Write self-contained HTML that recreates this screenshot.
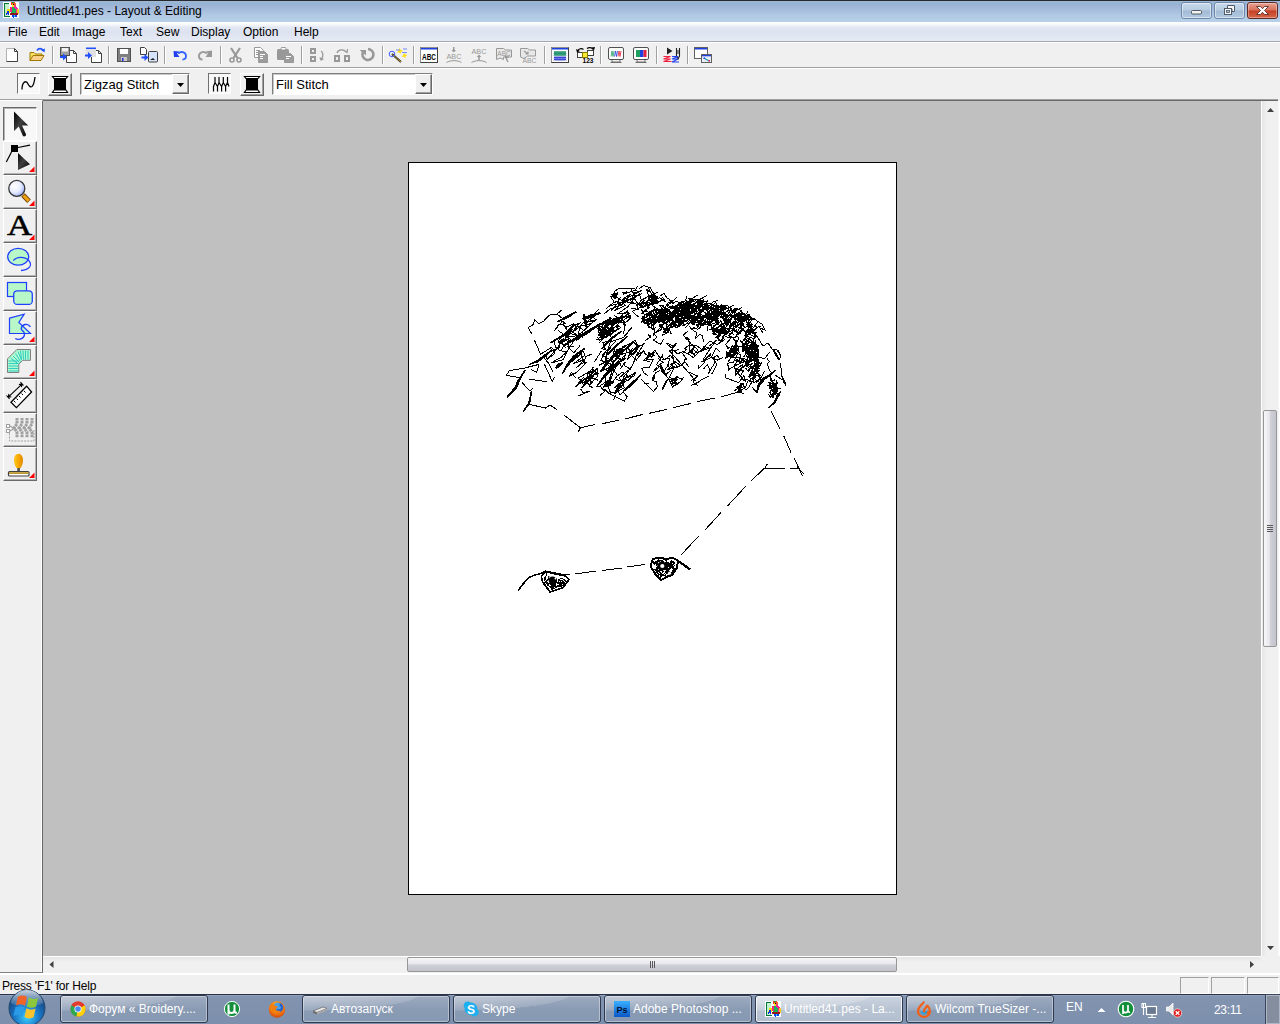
<!DOCTYPE html>
<html>
<head>
<meta charset="utf-8">
<title>Untitled41.pes - Layout &amp; Editing</title>
<style>
*{box-sizing:border-box;margin:0;padding:0}
html,body{width:1280px;height:1024px;overflow:hidden;background:#f0f0f0;font-family:"Liberation Sans",sans-serif;font-size:12px;color:#000}
.abs{position:absolute}
#titlebar{position:absolute;left:0;top:0;width:1280px;height:22px;background:linear-gradient(to bottom,#262a2e 0,#262a2e 1px,#a0b8d6 1px,#95b3d3 4px,#a3b6d9 7px,#a7c0dd 11px,#b2cae5 16px,#b5d0e8 20px,#bccdea 22px)}
#titlebar .ttl{position:absolute;left:27px;top:4px;font-size:12px;line-height:15px;white-space:nowrap;letter-spacing:0px}
#menubar{position:absolute;left:0;top:22px;width:1280px;height:19px;background:linear-gradient(to bottom,#ffffff 0,#f4f6fb 3px,#e3e8f4 5px,#dde2f0 10px,#e6eaf5 19px)}
#menubar span{position:absolute;top:3px;font-size:12px;line-height:15px;white-space:nowrap}
#menuline{position:absolute;left:0;top:41px;width:1280px;height:3px;background:linear-gradient(to bottom,#a5a9b2 0,#a5a9b2 1px,#fff 1px,#fff 2px,#f0f0f0 2px)}
#tb1{position:absolute;left:0;top:44px;width:1280px;height:24px}
#tbline{position:absolute;left:0;top:67px;width:1280px;height:2px;background:linear-gradient(to bottom,#a0a0a0 0,#a0a0a0 1px,#fff 1px)}
#tb2{position:absolute;left:0;top:69px;width:1280px;height:30px}
.sunk{position:absolute;border:1px solid;border-color:#707070 #fff #fff #707070;background:#f8f8f8}
.rais{position:absolute;border:1px solid;border-color:#fff #696969 #696969 #fff;background:#f0f0f0;box-shadow:inset -1px -1px 0 #a0a0a0}
.combo{position:absolute;background:#fff;border:1px solid;border-color:#808080 #fff #fff #808080;box-shadow:inset 1px 1px 0 #c8c8c8;font-size:13px;line-height:21px;padding-left:3px;white-space:nowrap}
.combo i{position:absolute;right:0;top:0;width:17px;height:20px;background:#f0f0f0;border:1px solid;border-color:#fff #696969 #696969 #fff;box-shadow:inset -1px -1px 0 #a0a0a0}
.combo i:after{content:"";position:absolute;left:4px;top:8px;width:7px;height:4px;background:#000;clip-path:polygon(0 0,100% 0,50% 100%)}
#work{position:absolute;left:43px;top:101px;width:1218px;height:855px;background:#c0c0c0}
#topline{position:absolute;left:0;top:99px;width:1280px;height:2px;background:linear-gradient(to bottom,#a0a0a0 0,#a0a0a0 1px,#696969 1px);clip-path:polygon(0 0,1278px 0,1278px 2px,42px 2px,42px 1px,0 1px)}
#page{position:absolute;left:408px;top:162px;width:489px;height:733px;background:#fff;border:1px solid #000}
#art{position:absolute;left:-1px;top:-1px}
#lefttb{position:absolute;left:0;top:100px;width:43px;height:873px;background:#f0f0f0;border-right:1px solid #696969;border-bottom:1px solid #808080;border-top:1px solid #fff;box-shadow:inset -1px 0 0 #fff}
.tbtn{position:absolute;left:3px;width:34px;height:34px;border:1px solid;border-color:#fff #696969 #696969 #fff;background:#f0f0f0;box-shadow:inset -1px -1px 0 #b4b4b4}
.tbtn.on{border-color:#696969 #fff #fff #696969;background:#f8f8f8;box-shadow:inset 1px 1px 0 #b4b4b4}
.tbtn svg{position:absolute;left:0;top:0;width:33px;height:32px;overflow:visible}
.tbtn b{position:absolute;right:1px;bottom:1px;width:0;height:0;border-left:7px solid transparent;border-bottom:7px solid #f00}
#vscroll{position:absolute;left:1261px;top:101px;width:19px;height:855px;background:linear-gradient(to right,#fff 0,#fff 1px,#e6e6e6 1px,#f0f0f0 6px,#f0f0f0 17px,#fff 18px)}
#hscroll{position:absolute;left:43px;top:956px;width:1218px;height:18px;background:linear-gradient(to bottom,#fff 0,#fff 1px,#e6e6e6 1px,#f0f0f0 6px,#f0f0f0 17px,#fff 17px)}
.thumb{position:absolute;border:1px solid #979797;border-radius:2px}
#status{position:absolute;left:0;top:973px;width:1280px;height:21px;background:#f0f0f0;border-top:2px solid #fff}
#status span{position:absolute;left:2px;top:4px;font-size:12px;line-height:15px;letter-spacing:-.2px}
#status div{position:absolute;top:2px;height:17px;border:1px solid;border-color:#a0a0a0 #fff #fff #a0a0a0}
#taskbar{position:absolute;left:0;top:994px;width:1280px;height:30px;background:linear-gradient(to bottom,#2a3446 0,#2a3446 1px,#9aabc6 1px,#8395b1 2px,#8193af 4px,#7c8fac 30px)}
.tk{position:absolute;top:1px;width:148px;height:28px;border:1px solid #2f3a50;border-radius:3px;background:radial-gradient(ellipse 115% 95% at 0% -10%,rgba(255,255,255,.42) 0,rgba(255,255,255,.14) 69%,rgba(255,255,255,0) 70%),linear-gradient(to bottom,#9eabc0 0,#8a9bb4 50%,#8798b2 100%);box-shadow:inset 0 0 0 1px rgba(255,255,255,.38);color:#fff;font-size:12px;line-height:16px;white-space:nowrap;overflow:hidden}
.tk.act{background:radial-gradient(ellipse 115% 95% at 0% -10%,rgba(255,255,255,.5) 0,rgba(255,255,255,.2) 69%,rgba(255,255,255,0) 70%),linear-gradient(to bottom,#ccd4e0 0,#b9c4d3 50%,#b3bfd0 100%);box-shadow:inset 0 0 0 1px rgba(255,255,255,.8)}
.tk span{position:absolute;left:28px;top:5px}
.tk svg{position:absolute;left:9px;top:5px;width:16px;height:16px;overflow:visible}
</style>
</head>
<body>
<svg width="0" height="0" style="position:absolute"><defs><symbol id="parrot" viewBox="0 0 16 16"><g shape-rendering="crispEdges">
<rect x="0" y="0" width="16" height="16" fill="#fff"/>
<rect x="1" y="2" width="5" height="12" fill="#c4f0cc"/><path d="M6,1.500h-5v13h6" fill="none" stroke="#00783c" stroke-width="1"/><rect x="0.500" y="1" width="1.500" height="14" fill="#00783c"/>
<path d="M3,11l1.500,-4h2l1,2l-2,4z" fill="#f8e000"/><path d="M3,13l2,-4l1,4M3.500,11.500h2.500" fill="none" stroke="#1030f0" stroke-width="1"/>
<rect x="8" y="0" width="4" height="3" fill="#f04018"/><rect x="9" y="0" width="2" height="1" fill="#20a040"/><rect x="9" y="2" width="3" height="3" fill="#f8e020"/><rect x="10" y="2" width="1" height="1" fill="#000"/><rect x="11" y="1" width="2" height="3" fill="#f06030"/>
<path d="M8,5h3l2,2v5h-4l-1,-2z" fill="#18b058"/><path d="M11,3l4,3v6h-2v-4l-2,-2z" fill="#ff20a0"/><path d="M7,5h2v5h-2z" fill="#ff2080"/><rect x="14" y="7" width="1.500" height="5" fill="#ffc820"/>
<path d="M7,11h8v1.500h-8z" fill="#901818"/><path d="M9,12.500h2v3.500h-1l-1,-1z" fill="#1040f0"/><path d="M11.500,12.500h2v2.500h-1.500z" fill="#1040f0"/><rect x="10.500" y="13" width="1" height="2" fill="#20d0f0"/>
</g></symbol></defs></svg>
<div id="titlebar"><svg style="position:absolute;left:3px;top:2px" width="16" height="16"><use href="#parrot"/></svg><svg style="position:absolute;left:1178px;top:0" width="102" height="22" viewBox="1178 0 102 22">
<defs><linearGradient id="cb" x1="0" y1="0" x2="0" y2="1"><stop offset="0" stop-color="#c9daec"/><stop offset=".48" stop-color="#b7cce2"/><stop offset=".52" stop-color="#a2bad5"/><stop offset="1" stop-color="#b4cbe2"/></linearGradient>
<linearGradient id="cr" x1="0" y1="0" x2="0" y2="1"><stop offset="0" stop-color="#e9a596"/><stop offset=".48" stop-color="#d9705a"/><stop offset=".52" stop-color="#c43f26"/><stop offset="1" stop-color="#d8694a"/></linearGradient></defs>
<rect x="1181.500" y="2.500" width="30" height="16" rx="2.500" fill="url(#cb)" stroke="#6d88a8"/><rect x="1182.500" y="3.500" width="28" height="14" rx="1.500" fill="none" stroke="#fff" stroke-opacity=".45"/>
<rect x="1214.500" y="2.500" width="30" height="16" rx="2.500" fill="url(#cb)" stroke="#6d88a8"/><rect x="1215.500" y="3.500" width="28" height="14" rx="1.500" fill="none" stroke="#fff" stroke-opacity=".45"/>
<rect x="1247.500" y="2.500" width="30" height="16" rx="2.500" fill="url(#cr)" stroke="#5c2a24"/><rect x="1248.500" y="3.500" width="28" height="14" rx="1.500" fill="none" stroke="#fff" stroke-opacity=".35"/>
<rect x="1191.500" y="10.500" width="10" height="3.500" rx="1" fill="#f4f4ee" stroke="#505a68"/>
<path d="M1227.500,5.500h7v6h-2.500v-2.500h-4.500z" fill="#f4f6f8" stroke="#505a68"/><rect x="1224.500" y="8.500" width="7" height="6" fill="#f4f6f8" stroke="#505a68"/><rect x="1226.500" y="10.500" width="3" height="2" fill="#a9c0da" stroke="#505a68" stroke-width=".8"/>
<path d="M1256.500,6.500h4l2,2.200l2,-2.200h4l-4,4l4,4h-4l-2,-2.200l-2,2.200h-4l4,-4z" fill="#fff" stroke="#5a3030" stroke-width=".9"/>
</svg><div class="ttl">Untitled41.pes - Layout &amp; Editing</div></div>
<div id="menubar">
<span style="left:8px">File</span><span style="left:39px">Edit</span><span style="left:72px">Image</span><span style="left:120px">Text</span><span style="left:156px">Sew</span><span style="left:191px">Display</span><span style="left:243px">Option</span><span style="left:294px">Help</span>
</div>
<div id="menuline"></div>
<div id="tb1"><!--TB1-START--><svg style="position:absolute;left:0;top:0" width="720" height="24" viewBox="0 44 720 24" font-family="Liberation Sans, sans-serif">
<g fill="none" shape-rendering="crispEdges">
<!-- separators -->
<path d="M52.5,46v18M108.5,46v18M164.5,46v18M220.5,46v18M301.5,46v18M382.5,46v18M413.5,46v18M544.5,46v18M600.5,46v18M656.5,46v18M687.5,46v18" stroke="#a0a0a0"/>
<path d="M53.5,46v18M109.5,46v18M165.5,46v18M221.5,46v18M302.5,46v18M383.5,46v18M414.5,46v18M545.5,46v18M601.5,46v18M657.5,46v18M688.5,46v18" stroke="#fff"/>
</g>
<!-- 1 new -->
<path d="M6.5,48.5h8l3,3v10h-11z" fill="#fff" stroke="#b0b0b0"/><path d="M14.5,48.5l3,3v10h-11M14.5,48.5v3h3" fill="none" stroke="#404040"/>
<!-- 2 open -->
<path d="M30,60.5v-8h4l1.500,1.500h6.500v2" fill="#f8e060" stroke="#a07800"/><path d="M30,60.500l3,-5h11l-3,5z" fill="#fbd08a" stroke="#a07800"/><path d="M37,50.500c1.500,-2.500 4.500,-2.500 6,0" fill="none" stroke="#2050ff" stroke-width="1.600"/><path d="M41,50l3.500,2.500l0.500,-4z" fill="#2050ff"/>
<!-- 3 import floppy->doc -->
<path d="M66.500,50.500h7l3,3v9h-10z" fill="#fff" stroke="#404040"/><path d="M73.500,50.500v3h3" fill="none" stroke="#404040"/>
<rect x="60.500" y="47.500" width="9" height="8" fill="#a0a0a0" stroke="#505050"/><rect x="62" y="48" width="6" height="3.500" fill="#f0f0f0"/>
<path d="M60,56h3v-2.500l4,3.500l-4,3.500v-2.500h-3z" fill="#2050ff"/>
<!-- 4 import window->doc -->
<path d="M91.500,50.500h7l3,3v9h-10z" fill="#fff" stroke="#404040"/><path d="M98.500,50.500v3h3" fill="none" stroke="#404040"/>
<rect x="86" y="48" width="10" height="9" fill="#e0e0e0"/><rect x="86" y="47.500" width="10" height="1.500" fill="#2050ff"/>
<path d="M85,54.500h3v-2.500l4,3.500l-4,3.500v-2.500h-3z" fill="#2050ff"/>
<!-- 5 save -->
<rect x="117.500" y="48.500" width="13" height="13" fill="#808080" stroke="#505050"/><rect x="120" y="49" width="8" height="5" fill="#fff"/><rect x="121" y="57" width="6" height="4" fill="#c8c8c8"/><rect x="122" y="58" width="1.500" height="3" fill="#2030e0"/>
<!-- 6 doc->image -->
<path d="M140.500,47.500h4l2,2v5h-6z" fill="#fff" stroke="#404040"/>
<rect x="148.500" y="51.500" width="9" height="10.500" rx="1" fill="#d6e3fa" stroke="#404040"/><path d="M150,60h5l-2,-2z" fill="#202020"/>
<path d="M141.500,56.500h3v-2.500l4,3.500l-4,3.500v-2.500h-3z" fill="#2050ff"/>
<!-- 7 undo -->
<path d="M178,53.500c4,-3 8,-1 8,2.500c0,2 -1.500,3.500 -3.500,3.500" fill="none" stroke="#3060ff" stroke-width="1.800"/><path d="M173.500,51l6,0.500l-2.500,2l2.500,3.500h-5.500z" fill="#2040f0"/>
<!-- 8 redo -->
<path d="M207,53.500c-4,-3 -8,-1 -8,2.500c0,2 1.500,3.500 3.500,3.500" fill="none" stroke="#9c9c9c" stroke-width="2"/><path d="M212,50.500l-6.500,1l2.500,2l-2.500,3.500h6.500z" fill="#989898"/>
<!-- 9 cut -->
<g stroke="#989898" fill="none"><path d="M231,48l6.500,10M240,48l-6.500,10" stroke-width="2.200"/><circle cx="232" cy="60" r="2" stroke-width="1.600"/><circle cx="239" cy="60" r="2" stroke-width="1.600"/></g>
<!-- 10 copy -->
<g fill="#fff" stroke="#989898"><path d="M254.500,47.500h6l3,3v7h-9z"/><path d="M258.500,51.500h6l3,3v8h-9z" fill="#9c9c9c"/><path d="M260,54.500h5M260,56.500h3M260,58.500h3" stroke="#fff"/><path d="M256,50.500h4M256,52.500h2M256,54.500h2" stroke="#989898"/></g>
<!-- 11 paste -->
<g><rect x="277" y="49" width="12" height="11" rx="1.500" fill="#989898"/><rect x="281" y="47.500" width="5" height="2.500" rx="1" fill="#fff" stroke="#989898"/><path d="M284.500,53.500h6l3,3v6h-9z" fill="#9c9c9c" stroke="#989898"/><path d="M286,56.500h5M286,58.500h3" stroke="#fff"/></g>
<!-- 12 flip -->
<g fill="#989898" shape-rendering="crispEdges"><rect x="310" y="48" width="6" height="6"/><rect x="310" y="56" width="6" height="6"/><rect x="312" y="50" width="2" height="2" fill="#f0f0f0"/><rect x="312" y="58" width="2" height="2" fill="#f0f0f0"/></g>
<path d="M321,51c2.500,1.500 2.500,6 0,8.500M320,57.500l1,2.500l2.500,-1" fill="none" stroke="#989898" stroke-width="1.300"/>
<!-- 13 -->
<g fill="#989898" shape-rendering="crispEdges"><rect x="334" y="55" width="6" height="7"/><rect x="344" y="55" width="6" height="7"/><rect x="336" y="57" width="2" height="3" fill="#f0f0f0"/><rect x="346" y="57" width="2" height="3" fill="#f0f0f0"/></g>
<path d="M337,53c1.500,-4 7,-4 9,-1M344,50.500l3,2l0.500,-3.500" fill="none" stroke="#989898" stroke-width="1.300"/>
<!-- 14 rotate -->
<path d="M363,52a5.500,5.500 0 1 0 5,-3" fill="none" stroke="#989898" stroke-width="2.600"/><path d="M359.500,50h6.500v5.500z" fill="#989898"/>
<!-- 15 wand -->
<path d="M392,54l9,8" stroke="#202020" stroke-width="2"/><path d="M392.500,54.500l8.500,7.500" stroke="#e8c020" stroke-width="0.800"/><circle cx="392" cy="54" r="2.800" fill="none" stroke="#4060ff" stroke-width="1"/>
<path d="M399.500,48l1.500,2l2,0.500l-2,1.500l-0.500,2l-1.500,-1.500l-2,0l1.500,-2z" fill="#ffe020"/><path d="M404,53l1.500,1.500l2,0.500l-2,1.500l0,2l-1.500,-1.500l-2,0l1,-2z" fill="#ffe020"/><path d="M396,50h4M403,49h4M402,52.500h5" stroke="#5070ff" stroke-width="0.800"/>
<!-- 16 ABC box -->
<rect x="420.500" y="47.500" width="17" height="15" fill="#fff" stroke="#404040"/><path d="M420.500,62.500v-15h17" fill="none" stroke="#909090"/><rect x="421" y="48" width="16" height="1.500" fill="#2040e0"/>
<text x="429" y="59.500" font-size="9" font-weight="bold" text-anchor="middle" textLength="14" lengthAdjust="spacingAndGlyphs" fill="#000">ABC</text>
<!-- 17 -->
<g fill="#989898" stroke="none"><text x="454" y="59" font-size="8" text-anchor="middle" textLength="15" lengthAdjust="spacingAndGlyphs">ABC</text><path d="M453,47h1.500v3h1.500l-2.250,2.500l-2.250,-2.500h1.500z"/></g><path d="M446.500,62.500c4,-2.500 11,-2.500 15,0" fill="none" stroke="#989898"/>
<!-- 18 -->
<g fill="#989898" stroke="none"><text x="479" y="54" font-size="8" text-anchor="middle" textLength="15" lengthAdjust="spacingAndGlyphs">ABC</text><path d="M478.250,60h1.500v-3h1.500l-2.250,-2.500l-2.250,2.500h1.500z"/></g><path d="M471.500,62.500c4,-2.500 11,-2.500 15,0" fill="none" stroke="#989898"/>
<!-- 19 -->
<g fill="none" stroke="#989898"><path d="M496.500,48.500h7l2,1.500h6v7h-8v2.500l-3.500,-1.500l-3.500,1.500z" fill="#e8e8e8"/><path d="M505,56l3,6M505,56l3.500,1.500" stroke-width="1.400"/></g><text x="504" y="56" font-size="6.500" text-anchor="middle" fill="#989898">ABC</text>
<!-- 20 -->
<g fill="none" stroke="#989898"><path d="M520.500,48.500h7l2,1.500h6v6h-8l-3.500,2.500l-3.500,-1.500z" fill="#e8e8e8"/><path d="M524,51l4,3M528,51.500v2.500h-2.500" stroke-width="1.200"/></g><text x="529.500" y="63" font-size="8" text-anchor="middle" textLength="14" lengthAdjust="spacingAndGlyphs" fill="#989898">ABC</text>
<!-- 21 wave box -->
<rect x="551.500" y="47.500" width="17" height="15" fill="#fff" stroke="#404040"/><path d="M551.500,62.500v-15h17" fill="none" stroke="#909090"/><rect x="552" y="48" width="16" height="1.500" fill="#2040e0"/>
<path d="M554,54l1,-3l1,3l1,-3l1,3l1,-3l1,3l1,-3l1,3l1,-3l1,3l1,-3l1,3M554,56l1,-3l1,3l1,-3l1,3l1,-3l1,3l1,-3l1,3l1,-3l1,3l1,-3l1,3" fill="none" stroke="#189068" stroke-width=".9"/><path d="M554,58.500l1,-2l1,2l1,-2l1,2l1,-2l1,2l1,-2l1,2l1,-2l1,2l1,-2l1,2M554,60.500l1,-2l1,2l1,-2l1,2l1,-2l1,2l1,-2l1,2l1,-2l1,2l1,-2l1,2" fill="none" stroke="#2030d0" stroke-width=".9"/>
<!-- 22 -->
<g shape-rendering="crispEdges"><rect x="577.500" y="52.500" width="6" height="5" fill="#fff" stroke="#404040"/><rect x="587.500" y="50.500" width="6" height="5" fill="#fff" stroke="#404040"/><rect x="582.500" y="52.500" width="5" height="5" fill="#ffe830" stroke="#808000"/></g>
<path d="M577.500,51c1,-2.500 4,-3 6,-1.500M587,48.500c2,-1.500 5,-1 6,1" fill="none" stroke="#000" stroke-width="1.200"/><path d="M576,49l1,3.500l3,-1.500zM591.500,47.500l2.500,3l1,-3.500z" fill="#000"/>
<text x="588" y="63" font-size="7" font-weight="bold" text-anchor="middle" textLength="11" lengthAdjust="spacingAndGlyphs" fill="#000">123</text>
<!-- 23 monitor zigzag -->
<rect x="608.500" y="47.500" width="15" height="12" rx="1.500" fill="#fff" stroke="#505050"/><path d="M612,60v2h8v-2M610.500,62.500h11" fill="none" stroke="#707070"/>
<path d="M611,56.500l1,-5.500l1,5.500l1,-5.500" fill="none" stroke="#20a060" stroke-width=".8"/><path d="M614.500,56.500l1,-5.500l1,5.500l1,-5.500" fill="none" stroke="#2040e0" stroke-width=".8"/><path d="M618,56.500l1,-5.500l1,5.500l1,-5.500" fill="none" stroke="#e02030" stroke-width=".8"/>
<!-- 24 monitor fill -->
<rect x="633.500" y="47.500" width="15" height="12" rx="1.500" fill="#fff" stroke="#505050"/><path d="M637,60v2h8v-2M635.500,62.500h11" fill="none" stroke="#707070"/>
<rect x="636" y="50" width="4" height="7" fill="#20a060"/><rect x="640" y="50" width="3.500" height="7" fill="#2040e0"/><rect x="643.500" y="50" width="3" height="7" fill="#e02040"/>
<!-- 25 play needle -->
<path d="M667,47.500v7l5.500,-3.500z" fill="#202020"/><path d="M676.500,48v8l1.500,3l1.500,-3v-8" fill="none" stroke="#202020" stroke-width="1.100"/><path d="M678,50v4" stroke="#202020"/>
<path d="M663.500,56.500h7l-7,2.500h7l-7,2.500h8" fill="none" stroke="#f02040" stroke-width="1.100"/><path d="M672,56.500h6l-6,2.500h6l-6,3h7" fill="none" stroke="#2040f0" stroke-width="1.100"/>
<!-- 26 windows -->
<rect x="694.500" y="47.500" width="13" height="11" fill="#fff" stroke="#606060"/><rect x="695" y="48" width="12" height="1.500" fill="#2040e0"/>
<rect x="701.500" y="54.500" width="10" height="8" fill="#e8f0ff" stroke="#606060"/><rect x="702" y="55" width="9" height="1.300" fill="#2040e0"/><path d="M704,58l5,3" stroke="#20a0a0" stroke-width="1.200"/><rect x="703.500" y="57.500" width="1.500" height="1.500" fill="#2040e0"/><rect x="708.500" y="60" width="1.500" height="1.500" fill="#e02040"/>
</svg>
<!--TB1-END--></div>
<div id="tbline"></div>
<div id="tb2">
<div class="sunk" style="left:17px;top:4px;width:23px;height:21px"></div>
<div class="rais" style="left:48px;top:4px;width:24px;height:23px"></div>
<div class="combo" style="left:80px;top:4px;width:110px;height:22px">Zigzag Stitch<i></i></div>
<div class="sunk" style="left:208px;top:4px;width:23px;height:21px"></div>
<div class="rais" style="left:240px;top:4px;width:24px;height:23px"></div>
<svg style="position:absolute;left:0;top:0" width="280" height="30" viewBox="0 69 280 30">
<path d="M22,89.500c0,-3 0.500,-5.500 2,-7c1.500,-1.500 3,-0.500 4,1.500c1,2 2.500,3.500 4,2.500c2,-1.500 2.500,-6 3,-9.500" fill="none" stroke="#000" stroke-width="1.300"/>
<g id="spool"><path d="M52.500,76.500h15l-1.500,2h-12zM54,90h12l1.500,2.500h-15z" fill="#fff" stroke="#000" stroke-width="1.200"/><rect x="54" y="78" width="12" height="12" fill="#000"/></g>
<use href="#spool" x="192"/>
<path d="M215,77v6M219,77v6M223.300,77v6M227.500,77v6M213.500,86v5.500M217.500,86v5.500M221.600,86v5.500M225.600,86v5.500M213.500,86.500L215,82.500L217.500,86.500L219,82.500L221.600,86.500L223.300,82.500L225.600,86.500L227.500,82.500L229,86.500" fill="none" stroke="#000" stroke-width="1.200"/>
</svg><div class="combo" style="left:272px;top:4px;width:161px;height:22px">Fill Stitch<i></i></div>
</div>
<div id="work"></div><div id="topline"></div>
<div id="page"><!--ART-START--><svg id="art" width="489" height="733" viewBox="0 0 489 733" shape-rendering="crispEdges"><path d="M150.1,159.7 153.2,158.4 156.4,157.2 159.4,155.8 162.4,154.1 165.2,152.1 168.1,150.2 167.9,149.8 164.8,151.2 161.6,152.6 158.6,154.2 155.6,155.8 152.8,157.6 149.9,159.3ZM143.1,180.7 150.3,177 157.5,173.1 165.4,164.5 171.1,161.6 170.9,161.2 164.6,163.5 156.5,171.9 149.7,176 142.9,180.3ZM158.1,182.3 168.4,177.2 178.6,172 185.5,167.2 192.2,162.3 191.8,161.7 184.5,165.8 177.4,170 167.6,175.8 157.9,181.7ZM175.1,157.3 177.9,156.6 180.7,156 183.4,155.1 186.3,154 189.2,152.6 192.1,151.3 191.9,150.7 188.8,151.4 185.7,152 182.6,152.9 180,154 177.5,155.4 174.9,156.7ZM175.7,152.5 175.7,156.5 176.4,160.3 177.7,164 178.3,164 178.3,160 177.6,156.2 176.3,152.5ZM99.2,235.4 103.9,230.9 108.3,226.3 110.8,220.9 112.8,216 117.2,208.7 116.8,208.5 111.8,215.4 109.2,220.1 106.9,225.3 103.1,230.1 98.8,235ZM115.5,249.4 118.8,245.2 121.6,241.6 122.9,235.1 123.4,229 123.2,229 122.1,234.9 120.4,241.2 118.2,244.8 115.3,249.2ZM148.3,206.3 149.5,205.5 150.9,204.9 151.9,204.2 152.8,203.5 153.7,202.3 154.7,201.3 154.3,200.7 153,201 151.5,201.2 150.1,201.8 149.1,203.1 148.5,204.5 147.7,205.7ZM154.7,211.9 158.5,205.3 163.1,199.9 166.7,195.7 170.4,191.9 176.6,187 176.2,186.6 169.6,190.9 165.3,194.3 161.5,198.7 157.5,204.7 154.3,211.7ZM173.4,225.9 175.6,223.9 177.8,222 179.9,219.9 182,217.8 183.9,215.6 185.9,213.4 185.7,213.2 183.5,215.2 181.2,217.1 179.1,219.1 177.1,221.2 175.2,223.5 173.2,225.7ZM189.1,224.4 196.5,214.9 205.2,206.2 210.9,201 217.1,196.2 216.9,195.8 210.1,200 203.8,204.8 195.5,214.1 188.7,224.2ZM196.3,224.9 197.7,224.4 199.2,224.1 200.6,223.4 201.7,222.2 202.4,220.7 203.3,219.3 202.7,218.7 201.2,219.3 199.7,219.8 198.4,220.6 197.4,221.6 196.6,222.9 195.7,224.1ZM207,231.9 208.1,230.4 209.3,229 210.3,227.5 211.1,226.1 211.7,224.6 212.5,223.1 212.1,222.9 211,224.1 209.8,225.2 208.7,226.5 207.9,228.2 207.3,230 206.6,231.7ZM215.5,229.6 217.5,228 219.5,226.6 221.5,225.1 223.4,223.4 225.2,221.7 226.9,219.9 228.9,217.6 230.8,215.3 232.8,213.2 232.4,212.8 230.3,214.9 228.1,216.8 225.9,218.7 224,220.4 222.2,222.1 220.5,223.9 218.8,225.7 217.1,227.5 215.3,229.2ZM121.8,202.6 124.4,201.6 127.1,200.8 129.9,199.9 132.3,198.2 134.7,196.4 136.9,194.6 139.2,192.5 141.4,190.4 143.7,188.5 143.5,188.1 141.1,190 138.5,191.7 136.1,193.4 133.7,195.1 131.3,196.9 129.1,198.7 126.7,199.8 124.2,201.1 121.6,202.2ZM251.8,202.1 252.5,205.3 253.5,208.8 255.4,211.2 257.4,213.2 257.8,212.8 256.6,210.4 255.5,207.8 253.9,204.7 252.2,201.9ZM246.5,212.1 246,213.1 245.5,214.1 245,215.1 244.9,216.2 244.9,217.3 244.8,218.5 245.2,218.5 245.6,217.5 246.2,216.5 246.6,215.5 246.7,214.5 246.8,213.3 246.9,212.3ZM259.1,217.6 258.1,219.1 257.1,220.5 256.3,222 255.6,223.6 255,225.3 254.4,226.9 254.6,227.1 255.5,225.6 256.5,224.1 257.3,222.6 258.1,221 258.7,219.4 259.3,217.8ZM349.3,230.3 350.5,226.2 352.2,222.9 354.8,219.7 357.3,216.8 362.6,213.4 367.2,208.5 366.8,208.1 362,212.6 356.3,215.2 353.2,218.3 350.6,221.9 349.5,225.8 348.7,230.1ZM365.2,188.1 365.9,189.7 366.5,191.3 367.3,192.9 368.4,194.5 369.6,196 370.7,197.5 371.1,197.3 370.3,195.6 369.5,193.8 368.7,192.1 367.7,190.7 366.6,189.3 365.6,187.9ZM372.4,229.3 368.9,234.7 366.5,239.2 363.7,242.4 360.9,245.7 361.1,245.9 364.3,243 367.5,240 369.7,235.1 372.6,229.5ZM373.9,214.7 374.4,216.3 374.9,217.9 375.5,219.5 376.2,221 377.1,222.5 377.9,224.1 378.1,223.9 377.6,222.3 377.1,220.7 376.5,219.1 375.8,217.6 374.9,216.1 374.1,214.5ZM195.1,184.1 198.2,181.6 201.3,179.1 204.4,176.5 207.6,174.1 210.8,171.6 214.1,169.1 213.9,168.9 210.5,171.1 207,173.2 203.6,175.5 200.7,178.3 197.8,181.1 194.9,183.9ZM198.1,194.1 201.5,190.9 205,187.7 208.4,184.4 212.3,181 216.2,177.5 220.1,174.1 219.9,173.9 215.8,177.1 211.7,180.3 207.6,183.6 204.3,187 201.1,190.5 197.9,193.9ZM204.1,202.1 207.6,198.2 211.1,194.3 214.4,190.4 218.3,187.1 222.2,183.6 226.1,180.1 225.9,179.9 221.8,183.1 217.7,186.3 213.6,189.6 210.3,193.7 207.1,197.8 203.9,201.9ZM192.1,210.1 194.2,207.5 196.4,204.9 198.4,202.4 200.7,200 202.9,197.5 205.1,195.1 204.9,194.9 202.5,197.1 200,199.3 197.6,201.6 195.6,204.4 193.8,207.2 191.9,209.9Z" fill="#000" stroke="#000" stroke-width="1"/><path d="M277,147.2 274.9,151.4 272.1,152.5 268.5,147.8 271.9,144.7M313.6,162.7 317.7,161.6 320.7,159.4 312.4,162.4M238.3,151 240,152.3 243.4,149.6 244.3,153.3 246.5,157.5 250.6,149.6 253.6,147.8 258.3,151.2M258,153 254.4,157.4 257.8,154.2 250.6,158.8 250.1,156 252.6,156.9 249.3,159M270.8,147 275.3,143.6 271,146.4 271.1,149.1 264.3,154.3 261.4,149.2 264.6,151 266.9,146.9 262.9,144.1M305.4,155.3 301.7,157.9 299.5,156.4 294.3,153.8 287.4,156 286.1,153.5 291.6,147.4M292.6,143.5 296.4,139.7 292.9,141.8 294.2,143.5 290.2,139.4 288.3,144.7 290.9,141.6 288.5,139.7 290.9,137.9M238.2,155.6 243.5,148.7 248.6,148.5 248.6,152.6 249,147 250.3,149.5 248.3,153.6 241.7,159.7 243.8,163.2 249.1,158.8M267,153.2 268.5,157.2 270.2,152.1 265.5,150.6 262.4,152.4M321.4,167.7 315.8,168.5 317,170.2 322.8,164.1 319.2,167.9 323.1,163.8 325.5,159.8 327.7,161.9 325.6,160.3 331.5,155.1M249.5,152.5 252.4,150.2 250.7,148 249.1,146.3M316.6,147.7 315.4,145.7 312,147.6 309.7,147 310.7,150.8M259.2,152.2 257.8,158 257.4,154.2 253.2,157.8M304.3,143.8 302.5,141.4 304.7,143 299,148.6 301.9,151.3 307.5,150.2 305,153.9 305.2,151.3 302.4,146.9M310.1,164.3 315.4,164.1 315.8,166.9 313.7,166.9M247,160.4 245.1,165.5 247.1,167 245.2,173.9M316.1,178.5 308.3,182.8M334.6,152.4 331.3,153.1 331.5,155.4 328.1,154.2 323.6,153.5 318.9,158 321.7,155.4 317.6,152.5 319.8,154.2 315.3,157.6M244.1,148.4 241.8,152.3 237.7,155.2 241.3,157.1 233.8,160.1 236.5,156.4 232.9,159.8 241,156 236.7,162.5M324.5,175.6 330,174.5 330.5,178M275.7,141.8 270.4,146.7 268.5,148.1 265.6,150.6 264.6,156.3 261.3,154.2 263.3,155.8M290.2,161.2 288.6,155.6 283.4,160.8 289.2,154.1 281,157.6M276.8,145.5 271.9,144.5 274.3,147.8 275.7,151.8M337,153.7 340,149.4M329,172.7 333,170.9 328.8,170.7 333.6,163.1 336.1,161.7M310.4,153.6 310.1,149.9 312.5,151.5 308.3,152 305.7,151.2 309.4,144.3 304.5,147.4 298.2,151.5 294,148.7M252.5,143.9 254,148.1 251.7,151 254,150.7 250.9,153.6 253.6,158.5 249.8,159.2M260.9,166.9 258.5,170.7 261.4,167.1 263.4,172.5M296.3,147.1 292.9,150.1 298.3,146 300.2,147.6 298.4,144.7 296.7,141.4 294.2,143.6 296.3,144.7 296.5,146.9 293,148.9M267.8,152.3 266.4,150.2 269.4,146.5 271.4,148.4 268,156.5 271.7,153.1 269.7,150M322.3,147.8 324.4,152.1 323.6,146.6 319.8,152.3M296.2,158.9 294,155.9 288.9,157.2 285.9,152.3M287.1,158.5 279.6,161.7 278.4,158.7 281.9,155.2 279.2,154.2M266.6,150.6 261.9,151.4 263.9,154.5 258.5,156 259.8,157.7M253.1,155.8 255.3,153.5 251.9,156.2 251,154.3 254.5,155.2 257.5,153.8 252.7,158.7 256.6,161.8 252.9,163.5 254,165.6M322.4,144.5 323.6,149.6 326.2,146.6 330.3,148 334.5,144.7M278.3,150.4 284.4,144 278,149 280.7,147.1 273.5,150.9 277.8,146.7 278.4,151.9 277.9,156.9M260.2,158.6 260.2,156.1 263,156.2 260.6,159.2 265.3,157.7M302.8,166.4 304.4,168.7 308,172.4 304.1,171.9 309.2,168.7 314,171.3 311,167.2 308.1,167.3 309.6,170.7M295,158.9 293.2,154.8 296.6,153.4 293.3,158.1 288.4,158.9 283.5,161.2 286.2,162.9 281.7,160.3 285.5,156.6M246.4,157.1 248.5,160.9 243.3,163.6 244.3,167.5 240.5,163.8 244.7,156.8 239.2,160.2 242.5,157.4M315.2,142.7 315.7,145.5 311.5,150.3 313,152.4M269.4,140.9 271.8,142 267.2,146 269.8,146.1 266.5,144.9 263.3,144.1M290.6,151.8 294.1,146.8 289.6,149.2 290.9,152M267.7,150 270.4,148.4 264.6,153.4 262.9,150.4M281.3,146.2 277.5,144.3 281.1,146.1 276.5,147.4 274.6,146.4 277.8,144 277,142.2 278.6,144.1 274.9,145.6M270.8,142 265.1,146 269.8,143 275.7,139.9 274.4,145.7 276,149M272.6,154.9 278.3,150 275.6,148 279.9,143.8 278,141.3 285.9,137.2 291.8,137.9 297.6,133.8M322.6,161.8 321.6,166 326.9,167.8 324.9,163.8 322,159.6 317.1,166M251.5,165.1 256.7,160.5 253.7,158.5 257.5,160.5 253,157.7 251.5,160.5 256.5,154.3 252.7,156.7 254.6,157.9 252.2,152.9M239.4,150.3 237.4,146.9M273.6,156.8 274,153.9 277.2,151.8 282,149.5 279.8,148.4 274.6,151.3 277.4,149.6 280.6,149 277.4,152.1 276.3,146.6M274.9,151.7 271.2,152.5 279.6,149.3 278.1,147 278.2,150.8 273.1,148.6 275.7,148.3 270.9,145M335.8,153.6 338.4,153.9 333.2,155.3 335.5,160.1 334.1,156.4 337.2,154.3 334.4,157.3 331.3,155.2M303,158.3 300.4,155 307.3,149.9 303.2,151.9 306.1,148.4 311.1,151.7 307.7,154 312.8,149.5 310.7,151.9 307.5,156.2M306.5,152.5 309.6,151.2 309.3,147.9 308.9,150.9 308.5,148.2 309.6,150.9 308.9,153.6 312.2,148.7M269.6,142.6 262.2,146.2 260.3,142.6 263,140.2 261.2,137.6M327.6,155.5 333.2,148.8 333.5,154.2 334.2,156.8 333.5,162 330,158 334.1,160.5 337.6,155.8 338.1,158.2M273.8,141.7 271.1,144.8 272.1,140.8 270.1,140.1M334.5,160.5 334.7,163 336.7,165.4 334.3,163.7M329.6,173.3 335.8,166.9 332.5,169 328.1,173.3M327.7,155.1 327.1,153.2 324.9,149.4 328.6,146.1 326,149.8 328.9,146.2 333.8,149.2 325.8,153 322.5,155.3M256.5,149.2 251.3,149.9 258.6,147 255.8,145.6 257.2,148.4 255.1,147.2 256.2,149.8 254.8,146.3 252.1,151 251.6,154.2M274.3,156.5 270.5,163.3 275.3,157.7 274.9,155.4 272,153.8 269.5,156.4 272.2,160.5 269.2,156.6 274,156.4 271.1,153M317.3,165.3 314.9,169.1 317.9,167.6 316.4,164.3 312.6,168.5 316.4,166.8 316.1,164.3M264.7,143.7 259.6,146.4 261.1,148.9 256.7,146.4 260.4,140.3M347,173.5 344.3,169.7 349.8,165.3 347.6,164.4 346.2,162.9 348.8,165.4 352.7,164.4M240.5,152.6 243.2,150.6 247,146.7 248.7,150.6 254.1,149.5M326.2,152.8 330.4,153.1 334.3,150.7 332.6,154.7 333.1,152.1 331.4,153.6 327.4,157.8M238.6,154 244,148.4 241.4,155.9 249.5,152.3 246.3,154.6 248.8,156 253,150.7 260.9,147M320.1,148.6 315.9,151.5 318.4,155 315,159.3 318.7,155.5 317.3,153 316.3,149.6M265.2,159.5 260.9,163.5 258.9,162.2 257.8,167.3 255.6,170.6 262.1,166.1 255.6,169.8M293.6,138.3 291.2,141.3 292.1,137.3 298.8,133.4M293.2,164.2 288.6,168.3M337.1,154.5 334.5,154.2 336.1,155.4 329.5,160.3M295.4,139.4 299.3,139.4 294.8,146.2 296.8,147.5 292.2,143.7M327.4,160.1 329.5,161.6 332.3,155.7 327.8,160 326.6,157.2 329.4,152.2 326.6,149.2M274.3,156.2 274.8,154 278.6,150.5 282,151.6M315,152.5 320.5,153.8 318.5,153.1 315.9,150.3 318.4,153.4 316,158.8 320.2,161.3 320.5,157.9 327.9,154.1M317.1,157.2 312.3,154.9 320.4,151.8 315.5,155.6 313.5,155.6 318.6,153 321.1,154.6 319.5,153.1 321.8,153.7M295.8,137.8 293.4,140.1 294.8,141.8 288.6,146.8 293.6,139.4 290.2,137.3 285.7,142.8 289,145.8 286.7,148.6M328.8,147.8 325.6,150.7 320.4,154.5 315.9,158.8 320.6,159.6 318.5,157.8 320.3,161.5 315.1,158.6 315.1,155.1M321.8,170.4 321.4,164.4 321.7,166.5 319.4,170.7 317.5,169.1 317.9,171.3 313.3,167.9 318.2,161.8M276.2,162.6 272.9,160.2 271.6,158.3 274.3,161.2 277.3,159.1 275,157.2 279.3,154.9 274.6,156.2M308.8,166.8 305.5,169.1 303,167.4 305.8,168.3 304.3,165.1 305.8,166.4 300.7,168 306.2,167.5 311.9,164.2 309.7,161.8M265.3,142.4 264.7,140.5 269.5,139.3 272.2,143.6M288.5,146.4 285,149.5 289,149 292.6,153.5M277,146.6 275,149.9 277.3,151.5 276.3,149.1 269.3,154.4 266.9,152.8 269.4,156.2 264.4,161.6 268.4,165.7M261.9,140.7 258.8,144.7 264.2,138.2M279.3,143.4 276.1,141.6 278,142.4 281.6,147.1M295.4,139.2 293.4,142.6 294.9,144.2 290.1,146.3 291.8,151.6 295.2,154 292.9,159.4 296.8,160.7 293.6,163.7M277.8,153 274.7,150 270.1,155.2 266.7,159.7 272.1,161.5 269.2,163.5 274.8,160.5 270,159.9 274.7,156.2M247,158.3 244.8,155.4 248.7,148.3 254.6,149.6 256.3,152 253.9,154.2 256.4,154.6 256,148.8 254.4,151.5M258.1,169.3 254.2,165.1 258.5,168.1 256.5,166.7 258.3,169.2 255.1,167.3M256.4,159.2 261.5,153.8 255.6,157.9 255.4,162.9 250.9,162.1 253.6,165.5 253.1,167.7 247.4,170.7M321.8,171.4 319.7,170.7 314,176.2 314.3,178.6M324.2,152.4 322.9,154.7 325.6,154.8 322.3,151.4 317.4,158.7 319.3,161.5 316.9,161 319.2,155.9 316.5,157.8 320.1,159.5M284.3,154.1 283.3,157.3 283.4,155 280.3,152.9 280,157.4 283.3,159.3 288,156.2 290.6,153.6 285.2,156.7 285.4,154.4M297.2,159.1 293.7,163.9 298.6,162.2 296.5,161 299.6,163.3M311.2,147.2 309,145.2 309.2,150.3 313.3,150.1 315.6,151.8M323,175.4 326.2,176.6 324.2,175.4 320.6,173.6 325.4,169.4M269.3,147.3 270.7,149 268,148.7 261.4,152.6 265.7,148.3M282.4,160.6 277,165.9M332.4,158.4 332.8,163.8 333.9,167.6 328.9,164.5 333.6,160.5 327,164.4 322.6,162 323.7,164.7M323.5,175.2 318.7,175 316.3,173.6 322.3,169.3 329.4,164.4 324.3,161.8 320.1,159.5M288.1,151.5 291.8,150.5 293.2,153.2 292,148.5 289.9,147 284.7,145.6 287.3,147.7 293.5,143 295.4,144.9M241.6,162.4 239.8,160.3 243.3,155.5 248.3,152.7 242.9,154 239.5,151.5 242.7,152.7 241.9,149.6 243.8,151.9M325.5,173.1 323.7,168.3 329.3,169.7 328.1,167.2M293.2,158.9 290.7,160.5 295.3,155.6 290.4,155 294.2,159.3 291.3,167.1M304.8,158.9 299.5,164.6 299.8,169.1M291.5,143.8 289.2,146.8 286,151.2 286.3,155.6M292.7,137.6 285.1,142.2 281.7,146.4 287.9,141 293.4,137.8 289.4,144.3 285.2,142.5 288.6,147M343.4,157.2 340.1,158.9 344.5,156.1 342.1,154.7 339.5,152 341.7,152.9M300.9,153.6 296.8,158.7 300.6,161.9 299.1,158.5M312.4,164.7 310.8,162.6 308.3,161.1 307.3,158.6 308.7,160.1 310.2,156.3 307.2,152.4M310.4,147.9 307.8,152 310.4,152.6 307.4,150.9 313.4,146 311.6,144.5 307.7,148.3M322.1,167.8 316.6,165.6 315.1,163.1 312.3,158.2M248.6,153.8 246,151.6 245.8,147.8 247.4,145.5M234.5,154.9 241.4,150.1 243.2,152.5 240.8,153.5 243,151.4 239.3,159.5 241,161.9 238.9,161.2M283.6,155.7 279.3,152.3 283.4,154.5 278.3,159.1 275.4,156.4 277.2,159.8M279.8,138.9 274.9,143.3 282.7,140.8 280,145 281,148.7 283.2,149.2 285.5,147.1 283.3,145.7 280.4,146.4 283.2,143.6M288.9,162.1 290.3,166.7M276.3,155.3 281,150.3 279,153.9 280,158.9 275.6,157.8 278.8,158.9M274.6,154.1 272,150.3 274.9,148.4 276.2,150.4 272.7,153.8 274.7,149 273.9,146.6 278.8,143.3 272.9,149.6 274.1,151.8M280.1,160.9 274.9,163.9 271.5,160.2 276.9,158.2 273.5,159.8 278.8,154.6 283.5,157 291.3,153.1M341.4,163.4 340,158.9 343.3,156 345.3,157.1 339.9,161.5 338.1,157.7 343.1,154.9M345.6,174.4 341.2,171.9 342.9,168.8 341.8,167.1 344.5,164.3 341,161.7 338.2,159.5 341.3,163.6 334.2,166.9M307.7,153 306,149.5 306.3,151.6 307.1,156.3 307.5,150.8M332.1,159.6 333.4,156.2 336.5,155.1 338.6,156.3 342.1,158.6 338.5,156.4 336.7,155 331.6,159.7M308.3,142.4 307.7,146 304.9,146 301.1,147M273.2,160.1 278.6,155.8 275,152.9 280.1,149.6 276.3,145.2M268.2,160.1 270.7,161.4 274.4,160.3 271.1,158.9 274.9,155.4 267.5,160 265.4,164.8 261.3,163.2 267,160.4 261,165.9M316.2,163.9 312.3,167.2 314.1,164.3 312.1,163.1 314.1,164.2M285.3,137.2 281.3,140.4 275.6,144.1 280.3,145.8 278.6,142.2 283.5,138.4 280.2,139.3 282.9,137.6 289.3,133.1M253.9,143.2 251,143.5M300.9,151.8 294.2,154.8 292.3,153.4 289.8,156.3 291.4,151.2M263.7,144.2 261.2,145.1 256,149.6 254,146M336.9,156.5 332.2,161.6 337.2,154.4 336,151.7 339.3,153.7 333.2,159.4 332.2,162.6M304.2,167.2 302.7,162.6 310.7,159.5 306.5,164.4M348.2,169.7 345.9,171.1 344.8,166.6 349.9,159.8M300.2,143.5 301.2,145.4 297.1,147.9 302,146.6 300.3,144.4 305.4,139.9 309.6,138.3M262.1,160.8 263.3,163.7 260.8,158.6 265,156.9 258.1,160.9 259.4,162.6M262.9,152.6 259.3,158.8 264.8,154.9 261.7,153.1 263.6,152.8 265.9,154.6M297.9,152.8 302.6,155.1 304.6,156.4 303.1,155 305.2,157.6 305.1,152.7 302.1,153.7M284,138.9 280.8,137.5 282.2,139.1 284.2,137.8 279.7,142.8 282.1,145.9 280.7,143.5 284.1,148.3 281.7,153.1 278.2,148.5M303.3,154.7 301.1,154.5 304.8,157.9 302.4,155.4 308.5,152.3 305.5,148.4 308.4,146.2M292.4,137.8 290.9,143.2 285.2,147.3 282.1,150.4M268.8,159.5 268.1,157.1 271.2,158.5 265.7,162.4 267.3,164.5M317.5,154.3 316.3,150.1 318.2,151.7 313,149.5 308.1,153.3 306.9,156.3 310.7,150.2M344.7,164.1 340.5,166.4 344.6,162.4 341.3,161.9 343.1,164.6M295.2,149.6 294.6,146.4 299.2,144.2 298.6,139.4 292.7,139.8 289.8,137.1 291.5,142.2 297,142.8 302.6,141M316.2,147.2 312.5,149.2 314.4,146.4 316.2,150.4 313.7,152.6 314.7,156.8M260.6,160 266.1,154.6 268.1,151.2 266.3,148.8 269.7,146.1 268,144.8 272.4,148.2M252.8,159.8 250.1,155.6 247.5,160.9 245.4,160 243.2,158 238.5,161.8 242.6,158.6M256.7,155.9 254.4,152.5 256.7,150.3 251.9,152.7 245.1,157 249.5,157.9 252.7,153.6M290.2,143.9 283.5,149.9 279.5,152.2 277.4,147.3 279.9,148.4M309,148.3 302.4,153.2 307.6,148.1 310.3,144.6 307.7,140.8 305,142.4 305.5,145.7 301,149.1M306.2,170.4 307.9,171.7 305.4,168.9 305.7,163.9 310.8,161.7M302,163.5 297.8,159.3 301.8,159.8 301.5,156.7 304.8,158.8 298.8,163.3 301.3,160.7M267.3,158.5 263.6,162 265.8,157.9 262.4,161.9 267,162 268.7,157.2 270.9,162.7 266.1,164.5 258.9,166.7 259,164.1M335.4,168.5 339.1,170.1 343.8,166.7 341.7,169.5 339.6,168.5 342.4,163.7 340.5,162.8M269.5,164.4 268.2,162.7 262.4,161.9 258.9,165.5 260.9,170 254,173.3M344.4,165.9 342.6,172.1 339.7,169 337.8,174.3M301.8,161.8 299.6,158 297.4,154.8 291.3,158.8 288.9,157 290.9,151.2 285.8,158.5 286.3,163.2M317.8,162.6 321.8,158.9 323.7,156.5 319.8,162.6 323.5,163.8 320.3,169.4 323.6,163M262.4,141.6 268.7,135.3M315.7,166.5 314.5,164.6 318.8,168.6 316.8,167.3 315.2,166 315.9,171.7 313.9,168.3 315.1,171.7 312.7,169.4M285.7,161.4 284.5,158.1 288.6,156.9 286.3,159.8 291.3,161.4M318.1,146.9 315.8,143.3 320.8,144.2 319.7,149.1 322,148.7 327.4,150M253,155.2 260.5,151.4 257.4,148.8 254.6,151.4 256.6,151.1 256.7,145.3 255.9,150 250.7,152.3 254.3,148.6 251.8,147.6M253.1,155.8 250.7,154.1 253.7,152.2 251.8,150.4M331.9,148.5 335,151.7 337.6,154.9 341.3,158.5 340.4,154.9 332.7,158.3M237.2,154.2 233.8,156.3 237.4,157.5 240.5,157.2 236.5,161.3 234,157.7 236.1,159.4 234.7,154.9 238.3,152.1M299.4,145.8 298.6,141.6 299.9,146.4 297.4,141.8 299.8,138.7M285.4,138.4 283,140.4 282.5,142.5 285.5,144.2 282.5,143.6 285.4,142.6 281,147.5 285.5,144.8 282.1,151.6 283.2,153.5M247.9,157.9 251.3,160.9 249.4,159.2 251.8,156.2M276,161.6 274.1,160.8 268.7,165.9 272.8,163.1 270.4,165.2M293.2,150.7 287,155.7 284.1,159 287.1,163.1 285.6,158.9 288.1,157.2 289.4,158.9 291.4,160.2 293.9,161.6 288.3,163.8M315.8,146.1 313.1,142.7 309.6,146.4 305.9,150.2M342,154.1 336.6,156.2 340.3,153 335.9,160.5M246.7,147 249.8,147.2 254.2,149.4 251.7,152.4 252.8,155.3 248.9,155.5 256,150.9 253.4,148.4 252.5,152.7 257.5,151.6M256,148.2 252.1,148.2 255.1,143.4 256.8,147.7M319.4,146.3 315,143.4 309.8,145.9 309.2,150.1 305.3,154.7 310.9,149.5 305.4,147.3 303.8,145.3 311.3,142.8M247,153.5 245,155.9 246.2,159.3 240,163.1M273.5,161.3 277.4,156.6 276.1,154.5 275.1,148.9 278.2,145 277.6,142.3 279.3,143.6M329.4,157 324.5,154.5 320.4,160.2 318,162.2M294.6,156.4 291.4,152.8 295.6,147.3 289.3,153.1 288.5,148.6 282.1,152.5M251.2,147.6 249.2,151.6 247.6,149.6 247.1,147.6 242,151 243.7,153.2 241.6,150 249.2,146.5 244.3,143.8M282.8,152.7 287.9,155.8 284.8,154.2 288.1,151.4 284,155.6 285.4,154.2 281.3,152.4M293.4,166.4 289.4,164 292.5,160.9 295.2,163.4M315.8,175.3 312.5,179.3 309.7,175.2 314.8,167.9 311.9,168.8 315.1,169.8M313.5,152.5 307.4,154.9 302.5,156.7 306.7,156.6 303.7,158.7 308.6,157.6 307.8,154.1M277.5,138.8 278.8,133.9M311.4,177.2 307.9,175.6 313.8,170 316.6,171.8 314.5,175.1 316.5,177.7M256.9,154 261.3,153.8 261,150.5 262.8,154.4 257.1,157.1 255.5,152.9 251.7,154.6 253.5,158.2M283.9,156.6 284.8,161.9 287.7,160.3 291,160.6 293.1,159.3 294.2,161.5M262.2,150.3 261.2,147.3 257.3,151.4 262.6,146.3 265.7,146.6 266.7,144.5 273.8,139.4 278.8,138.8M268.1,151.9 261.7,157 257.4,161 255,157.2 261.7,153.3 259.1,154.7 263.1,150.6 257.8,148.1 253,152.3 256.7,146.2M246.1,158.9 241.8,156.9 244.5,154.7 238.3,160.4 240.6,165 245.2,167.2 248,165.6M316.2,149.8 312.1,152.9 314.4,149.7 308.8,156.6 311.3,160.4 306.1,164.7M303,155.4 300.3,150.4 298.1,153.9 301.2,155.9M283.6,151.3 281,151.8 286.5,147.7 282,153.5 286.4,156.7M263.8,156.2 264.8,158.2 261.4,157.1 264,154M257.9,170.3 255.6,167 258.7,167.7 254.1,164.8M296.6,147.7 302,146.9 308.6,142.7 313.5,145.2 311.8,149.8 315.2,152.6M333.2,148.6 330.8,151.4 332.4,154.6 328.6,156.1 325.5,161.7 327.5,163M316.4,148.3 316.4,145.4 317.8,147.1 325.4,143.2M292.6,149.4 290.3,144.1 290.5,141.4 292.6,145.7M311.2,173.2 310.6,178.2 308.5,174.5 311.5,171.7 308.5,170 315.4,165 312,169.4 312,174.3 310.2,169M306.4,154.3 309.2,150.7 306.3,155.2 312.3,152.2 306,157.8M337.9,169 341.6,165 338.9,162.4 341.1,160.3 344.3,161.6M280.4,144.4 278.8,140.5 273.7,144 279.9,141 283,137.9 287.3,140 283.6,137.6 280.4,136M308.9,158.4 301.5,159.6 303.3,160.8 299.9,163.3 301.7,160.8M304.4,169.6 309.1,165.1 305.3,170.3 311.1,164.3M281.6,141.6 283.7,137 286.1,137.5 288.7,139.4M338.7,187.6 340,183.5 344.5,184.4 346.9,183.9 343.2,181.8M344.7,171.7 342.5,169.7M341.4,204.2 345.3,204.4 350.2,206.1 345.7,209.4 349.4,205.9 348.2,208.7 349.9,203.3M351.4,207.3 349.9,202.5 346.9,205.3 351.3,203.8 348.2,199.6 343.6,197 340.3,192.2 341.2,195 346.9,189.6 344.1,193.2M348.8,186.9 350.1,190 346.1,189.1 349,182.9 345.8,191.1 341.2,197.9M352.8,216.8 356.7,208.9M344.8,181.5 348.2,182.7 349.7,184.3 348.4,188 344.1,186.9M341.7,184.7 338,181.9 335.5,183.7 341.1,185.5 338.2,184.5 342.5,178.4 341.5,176.2 335.9,178.2 338.8,174.3M346.8,195.3 345.8,190.2 351.1,189.6M341.7,189.2 337.7,187 334.3,189.9 335.5,181.3 333.4,180.9 338.5,174.5 340.8,171.6 338.2,174.4 344,175.6M339.4,204.4 338.2,202 342.2,205.1 344.5,205.6M343.7,199.2 342.3,196.8 346.6,199.5 345.5,206.2 349.9,207.1M340.9,202.7 338.3,204.6 339,201.2 334.7,197.4M344.5,205.3 347.3,201.7 348.6,204.3 344.8,204.8 348,209.7 343.2,209.9 341.7,214.2 343.3,211.4 344.8,208.4M349,184.3 344.9,180.3 340.6,176.6 337.8,182.3 339.3,184.2 341.5,175.6 346.2,176.5M340.9,216.1 346.5,210.2 340.8,214.5 342.7,217.1 347,215.4 345.7,211.5 343.5,209.2 342,214.4M348,215.6 345.9,214.2 345.3,220.2 349.5,219.6 347.5,219M340.2,207.1 342.6,206.6 344.7,206.4 341.9,212.2 347.2,214.3 349.7,207.5 354.1,199.7M339,203.3 339.6,196.2 338.1,201.5 335,205.9M342,186.7 337.4,192.4 341.4,196 345.2,189.2M350.2,187.6 348.4,193.1 344.9,191.5 347.8,188.6 349.9,185.8M345.7,193.5 343.6,192.9 341,193.8 344.5,186.5 348.2,179.7M344.4,188.2 344.9,191.1 347.9,193.2 347,197 350.8,197.6M345,183.4 342.9,183.4 346.6,185.2 348.1,186.9 349.4,189.3 342.3,193.8 345.4,185.5 342.9,185.5 345.8,177.9 342.9,182.8M341.9,203.1 345,206 342.8,214.1 347.2,207.4 345.5,205.9 346.9,202.5M338.5,197.9 342.1,191.3 339.7,189.9 345,190.3 341.5,198.4 339.1,205.1M332,178.7 336.5,182.5 334.8,186 338.1,188.6 336.2,187.1 339.4,190.5 336.4,188.1 334.2,188.1M349,213.2 352.8,215.7 349.5,218.9 345.7,216.1 343.5,216.7M340.8,208.1 344.9,204.1 340.2,209.3 337.6,205.8M345.5,183.3 343.6,182.3 342.1,184.8 339.8,188.6 335.7,195M342.3,191.8 345.4,194.3 342.6,196.9 345.3,193.6 347.2,190.1 343.4,196.5 348.5,191.2M341.8,189.5 339.7,195.5 344.3,197.7 349,191.8 349.8,194.9 347.6,198.9 350.8,192.6M341.5,219.5 343.5,220.4 342.1,218.2 344.1,219.8 339.6,226.9M348.7,218.2 351.3,220.1 349.5,224.8M345.2,192 347.8,184.4 349.4,186.8 351,182.9M348.3,198.8 349.7,192.1 350.4,187.3 346,186.9 347.5,181.6 343.8,183.7M339.7,173.2 337,173.3 338.1,170.3M345.2,201.7 339.7,202.7 338,197.6 343.5,199.1 346.1,198.5 350.5,190.8M337.7,180.3 335.2,185.5 337.2,186.9 334,182.2M342.4,192.6 344.7,187.5 340.5,187.2 337.4,192.3 339,186 335.7,184.3 335.3,187.8M341.3,190.4 336.6,187.5 340.6,187.9 342.2,186.5 338.2,194.4 340.4,191 338.2,189.7M341,186.9 344.4,187 343.8,184.2 341.7,187 343.3,180.6 338.7,178.5 334,186.1 335.2,181.3 337.6,185.7 334.7,185.3M348.4,170.2 347.4,172.1 345.5,177.5 348.6,173.5M349.9,205.6 347.9,202.8 350.8,198.9 346,196.3M341.2,205.5 339.2,204.7 342.8,198.1 340.6,198.2 338.9,202.6 336.6,203.9M348.6,208.9 351.1,212.5 348.8,211.6 351.2,208.7 349,208.2 351.4,200.3 349.3,199.6 350.4,194.1 347.1,192.8M348.6,181.8 346.1,188.1 345,184.7 348.4,181.4 344.5,185.2 347.9,177.9M348,213 343.2,210.8 346.8,210.9 344,208.7 347.2,202.8 349.3,204.7M348.5,211.3 346,214.2 347.9,211.5 344.2,217.3 346.3,211.8 349.3,214.1 346,212.4M350.1,218.7 347.8,220.6 352.4,217.1 350.1,213.5 353.8,214.2M340.4,217.9 337.1,225.9M335.1,202.1 328.1,207.3 335.6,208.3 331.4,216.3M329.4,178.7 326.9,183.3 329.8,184.6 326.2,177.8 329.7,178.4 326.8,184.5 333.8,184.4M338,219.7 335.5,213.2 336.9,217.4 342,218.5M320.2,186.9 317.7,182.6 322.8,176.1M326.1,191.2 330.1,186.4 327.1,186 330.9,189.5 329.6,183.3 325.6,188.9 322.5,188.3 327.4,190.6 328.8,195.8M337.4,219.4 334.4,217 330.1,210.5 334,206.4 327,213.7M329.1,191.2 322.1,190 328,185.3 325,190.6M323.7,205.3 320.4,208 319.8,201.2 325.5,200.3 329.5,192.3 326.9,189.4 329.7,191.3 332.7,192.9 331.5,198M325.5,197.8 332.2,199.2 327.2,196.4 332,200.3 336,196.8 331.4,195.8 323.8,195 329.3,190.9 325.5,186M321.8,197.9 322.8,193.5 323.3,188.1 319.7,192.2 324.3,183.6 327.8,187.9 324.8,193.9 329.7,198.7 324.4,206M336.3,204 329.3,209.8 327.3,207.5 330.5,212.2 334.3,215.7 330.9,220.4M335.2,199.6 333.5,196.5 336.1,199.8 326.2,204 327.5,208.1 327.8,212.9 331.8,208.7 335.1,203.1M325.6,191.5 319.9,200 326.6,191.4 317.1,196.2 322.5,191.1 318.2,189.9 318.6,194 323.6,185.2M327,185.6 321.8,189.9 317.2,196.8 319.5,192.5 325.6,187.5 319.3,184.6M216.1,154.7 210.6,160.2 202,162.2 197.8,164.7 201.6,159.9 199.9,157.3 196.6,160.2 198.3,163.4M205.1,162.5 210.2,158.1 205.8,160.4 206.6,158.3 203.2,161.7 199.9,159.8 194.8,162.4 197.5,163.5 202.8,159.9 205.8,161M201.5,162.5 204.4,160.4 210.4,156.2 205.9,153.5M207,164.2 209.7,166.2 203.6,171.8 200.1,173.6 203.2,167 210.1,163.7 212.6,165.5 209.6,167.8 204.3,170.7M202.8,165.5 204.5,169.2 201.7,170.6 200.5,168.2 202.2,171.3 202.3,175.4M217,152 219.8,148.5M207.1,161.5 212.5,159.9 206.4,165.5 201.8,172.1 199.6,173.1 195.1,176.2 203.1,172.8 198.7,170.7 206,167.1M197.1,170 196.9,165.1 201.5,160.1 200.5,158.3 203,155.9 196.9,160.7 199.5,165.2 196.7,162.8M203.8,160.6 203.6,162.8 209.7,157.6 213.9,161.1 217,159.8M189.5,175.5 191.7,178.5M218.2,161.9 217,163.7 215.4,159.6 214.1,157.5 214.2,153.1 210.6,157.1 207.6,159.9 206.1,156.7 202.3,159 198.5,163.4M194.5,168.4 189.4,166.2M207.9,156.8 203.3,159.9 208.7,156.7 211.3,154.8 206.6,157.9 210.7,156.2 204.5,159.9M197.4,161.8 200.4,165.9 203,166.4 202.1,169.3 200.5,167.8 194.2,171.8M194.6,168 199.7,169.8 193,172.6 195.7,176.5M198.6,174.2 197.1,171.8 202.4,166.5 196.5,170.5M199.6,173.8 193.1,176.7 194.5,174 197.1,172.3 193.9,175.8 192.7,170 189.7,173.1M196.1,172.8 197.9,175.2 203.3,170 200.3,172.3 204,168.4 196.5,172.5 202,166.6 207.8,160.8 205.3,163M191.3,167.9 191.7,163.6 195.8,167 192.2,168.8 198.5,163.4 198.5,158.4 191.8,162.1 196.2,160.5 201.5,157.7M205.4,157.7 200.9,163.4 194.9,169.2 198.8,167.3 193.3,173.7 197.8,169.5 192.6,167.1M198.9,171.1 192.4,176 197.2,169.2 192.7,174.5 198.8,169.2 204.6,163.5 203.1,160.5 200.6,159.4 203.2,157.6 198.5,163.4M217.1,163.6 215.5,172.1M210.9,155.9 209.2,158.6 211.5,160.2 209.4,159.2 213.6,155.1 220.3,154.6 217.7,156.5 215.8,154.6 221.3,151.1 216,150.2M201.8,161.6 197.7,165.3 191.8,170.9 196.1,168.2 193.6,171.9 194.8,174.9 191.5,170.4 193.2,173.3M191.8,162.3 195.2,163 190.9,169.4 190.4,164.3 190.4,168.6M213.2,154 209.2,157.1 211.6,155.1 215.3,158.4 212.2,160.4 215.3,156.9M191.4,171.8 197.9,168 191.1,172.2 196.2,174.8 191.6,180.7M207,162 200.5,167.3 204.5,166.4 204.9,163.8 202.2,167.5 198.9,165.8 204,167.5 199.4,170.7M194.8,170.6 191.2,173.1 194.9,169.7 197.8,171.3M196.6,169.9 193,172 195.4,168.9 190.3,173.6 194.2,172.3 201.1,167.9M192.7,173.6 191.3,172.1 194.7,171.3 193.5,167.4 198.2,164.1 195.7,168.2 197.8,170.5 195.5,169M198.6,169.1 196.6,171.7 200.7,173.5 198,175.7 203,168.6 195.2,173.2 188.7,177.8M205,158.1 201.2,154.9M213.6,159 212.7,155.8 214.8,156.4 220.2,151.5 221.7,157.2 215.5,162 214.9,158.5 219.9,155.4 222.5,153.3 222.4,157.3M205.9,170.6 204.1,166.5 199.5,173.5 203.2,171 196.7,175.3 202.6,171.8M249.6,136.7 244,138.9 247.2,141.1 245.4,138.5M240.4,135.6 242.8,137.7 245.2,139.2 243.5,137 245.6,138.4 248.2,138.3M247.9,134.5 246,136.9 249,134.4 250.6,136.8M247.3,137.9 247.7,134.9 242.9,137.2 246,134.8 246.7,138.1M243,135.5 242.8,133.4 239.7,137.6M247.2,132.8 243.3,136 242.4,138 240.8,134.8 242.4,138.1 244.7,135.3 244.5,132.8 249.8,130.3M241.6,134.2 244.3,134.9 247.1,131.5M242.9,134.5 244.6,137 246.1,140.3 243.4,137.5 244.2,140.4 242.5,138.9 246.3,136.4M247.8,134.6 244.8,134.1 245.9,136 248,133.3 245.7,137.3 248.9,137.8 246.5,135.6 244.6,134.4M248.8,140.7 246.9,139.8 250.5,137.8 246.4,139.5 248.8,141.8 246.8,141.4 244.4,141.3M242.5,140 242.4,137.3 246.9,135 246.4,132.2 243.4,135.1 241.6,133.4 244.7,134.6 242.7,138.5 244.3,140.3M249.4,134.5 247,136.4 247.6,138.4 245.8,141.2 243.7,141.5M246.5,133.8 245.3,136.7 243.1,134.4 244.6,136 246.9,136.8 245.3,134.2M246.6,132.2 243.1,133.4 240.6,135.4 245.9,133.8 248.1,135.1 246.4,136.5M248.5,137.5 249.3,140.5 246.9,137.9 245.1,135.1 247.3,137.5 245.7,134.9 248.2,133.2 243.2,135.1M241.5,129.8 238.5,127.3 240.6,134.3 233.4,138.2 230.7,130.5 233.4,137.9 228.9,143.8 230,147.3 223.5,146.4M217.3,140.8 215.2,138.2 223.5,133.6 233.8,128.5 226.2,130.7 222.7,138.6 226.5,141.4 222.3,138.7M241.7,144.9 232.5,152.4 238.7,148.1 240,142.5 247.1,139.3 245.7,136.4 251.4,139.9M249,138.9 247.6,134.3 239.3,139.4 243.7,133.5 236.9,141.7 231.4,142.4 242.2,139.9 249.3,135.5 246.5,132.8 241.8,125.3M242.3,146 238.3,142.6 249.7,141.2 254.2,137.8M235.7,150.1 232.9,147.1 235.9,151.3 236.5,156.1M230.4,154.9 224.2,149.3 232,145.7 236.4,138.3 231.5,141.9 235.7,145.3M211.2,139.5 207.5,143.3 209.8,145.7 206.1,148.9 217.2,143.3 214.7,140.4 222.5,137.3 213.3,142.5 209.4,139.6 213.1,134.7M255.7,138.2 251.2,135.6 257.6,140.1 254.7,135.2M202.9,148.7 206.6,145.1 209,142.1 218.7,137.8 222.7,132 214.5,137.3 214.5,142.8 202.2,146.8 195.5,152.4M218.2,150.9 210,151.6 220,144.6 227.5,133.9 233.6,131.7 225.4,135.4 230.1,141.9 235.2,146.4 233.5,143.6M244.1,133.4 245.7,142 232.7,145.3 238.1,139.7 239.2,143.4 234.4,144.9 240.3,142.1 233.4,140M203.7,131.7 205.2,135.6 205.7,130.9 207,136.8 209.9,130.5 202.6,134.7 206.5,140.5M226.9,131.8 223.2,128.6 226.4,130.9 227.2,135.2 217.7,139 226.5,134.7 223.4,127.2M214.3,131 219.3,129.5 214.9,132.5 227,128.4 229.8,123.7M227.9,179.6 216.7,183.8 208,192.9 214.3,200.2 207.8,194.2 211.3,191.1 200.1,199.1 206.2,192M198.4,187.5 194.6,185.3 203.7,177.9 194.9,180.8 197.8,188 193.5,186.3M209.3,190.5 212.1,187.4 202.4,198 193.9,193 197.9,189.2 192.8,198.2 198,200.8 198.5,194.1M199.9,222.9 206.3,219.6 199.8,224.6 202.2,230 207.2,230.5 216.6,225.6 214.1,221.6 211.5,215.7 219.9,208.6M206.6,193 210,187.3 202.1,196.8 212.5,186.3 211.4,193.6M207.7,183 204.4,195.9 206,200.9 197.5,207.9 202,208.7 207.6,201.4M211.7,201.5 206.4,206.2 209.4,200.7 203.2,210.2 201.7,221.2 206,208.4 208.1,205.1 216.6,193.1M216,174.4 224.3,164.8 215.6,175.6 202.4,179.7 197.9,194 197.9,200.7 202.7,201.9 200.6,207.5 206.2,202M212.8,203.4 210.9,198.8 202.2,205.5 205.8,202.4 201.9,195.9 212.2,185.9M223.3,207.7 216,203.2 217.3,199.9 211.8,207.4M193.4,188.9 186.7,199.7M207.7,233.6 205.8,237.7M196.6,212.3 198.3,221 195.4,225.5M207.8,178.8 198.7,189.2 203.1,186.2 197.4,189.2M224.3,194.5 228.2,198.1 236,188.4 228.9,193.5 235.9,181.8 224.9,187.9 220,194.5 229.4,183.5 226.7,191.5M203.9,211.7 201.6,215.8 202.1,223.5 210.7,211.8M229.5,190.4 224.4,203.8 215.3,215.5 219.7,218.8 228.1,210.1 215.3,217.7M200.5,218.2 190.5,224.9M210.3,224.5 213.1,226 215.6,221.4 210,226.2M224.7,185.8 219.4,197.3 228.2,189.6 230.7,184.8 225.5,180.6 231.5,183.9 224.2,191.8 218.6,183.5 212.1,187.9 215.1,193.1M219.1,186.8 215.7,198.8 208,194.4 220.2,190.1 222.6,193 219.8,184.4 226.8,178.1 230.7,185.1 223.3,193M216.6,228.5 212.1,233.1 209.9,228.2 213.7,223.7 208.1,228.1 216.9,217.7 210.8,223.5 214.4,218.7 206.1,226 218.1,219.1M204.6,206 209.8,214 214.1,210.1 220,213.9 215.5,216.8 210.2,228.7M204.4,196.5 191.2,203.1 198.3,199.3 198.1,204.1 194.7,207.9 197.3,201.2 202.5,205 192.7,209.7 196.1,204.4M209.5,195.6 214.7,188.1 214.2,184.1 213.9,191.7 210.8,189.4 207.8,187.3M271.2,187.8 262.9,188.5 269.1,180.9 263.2,185.5 257.6,180.8 264.6,183.5 264.6,188M286.1,194.5 293.6,188 301.8,179.1 308.6,182.3M298.3,188.4 295.9,184.2 301.6,186.2 288.9,190.6 297.2,186.5M287.4,183.7 284.6,188 282.3,190.5 286.1,192.3 290,187.8 287.1,185.3M295.6,207.1 299.2,202.5 302,208.3 299.9,212.5 302.6,207.7 307.3,199.9 302.5,193.4 293.7,199.9M277.6,174.9 282.4,178.3 278.3,175 281.5,180.4 282,189.3 285.1,191.7 284.2,186.5 289.4,190.7M295.5,179.7 294.5,174.1 292.1,172 287.5,176.3 288.7,170.7 283.5,167 280.9,164 283.2,166 288.7,166.7 285.2,165.5M290,213.6 283,218.9M243,176 240,172.8 243.3,174 236.6,179.4M255.7,177.1 252.6,182.3 245.4,178.3 248.9,175 246,172.3 255.4,162.9M290,202.9 290.7,206.1 297,200.1 295.6,196.9 301.2,188.2 308.3,178 301.6,183.9M303.2,191.5 294,199.7 303.3,195.4 308.2,186.1 312.6,190.4M294.5,188.1 288.6,183.5 280.8,183.4 276.6,186.9 282.3,181.7 286.3,184.2 280.3,191.4 285.2,196.1M279.6,169.3 275.4,173 278.6,177.1 282.7,180.4M278.6,187 274.7,191.5 278.7,197.5 275.7,198.2M174.5,167.7 171,164.4 183.7,161.5 174.6,169.1 175,175.7M183.7,192.2 177.5,194.5 176.4,199.9 168.2,205.5 177,197.2 168.4,200.6M190.2,206.8 182.3,211.1 189.6,206.1 190,211.2 179.8,215 185.5,210.2 184.2,205.9 189.9,212.8M186.8,156.1 183.5,155.8 187.7,153 177.5,160.9 184.7,158M145.1,209.9 141.2,202 136.2,196.1 139.6,191.2 151.5,185.5 150.9,178.3 155.2,172.4M159.6,189.1 155,197.7 143.1,201 153.6,194.9 157.9,189.7M173.3,159.6 163.8,170.2 167.5,168.4 176.4,159.9 184.4,159.6 188.5,157.1 177.7,166.9 169.4,173.8 164.2,181.4 156.5,193.2M181.3,223.1 184.3,220 189.8,214.5 186,208.2 180.8,210.3 184.3,215.9 190,218.2M161.7,177.7 156.3,183.9 163.6,178.4 156,172.5 164.6,167.4 157.5,175.2 169.3,173.7 163.4,168.5M145.8,169.2 154.3,159.2 157.4,161.5 149.2,163.1M172.7,226.9 175,230.8 182.3,228.9 169.8,234.1M185.2,225.6 181.9,224.4 177.6,217.8 182,214.5 183.6,221.4 178.8,213 185.3,205.2M171.6,192.9 175,189.1 177,193 165.2,202.1M180.6,221.9 175.4,215.3 167.2,225.1 174.3,219.4 181.5,214.4 171,221.3 181.3,219.8 173.8,221.2 182.2,217.1 175.3,223.4M167.5,216 163.3,210.1 161.4,214.1 167.9,210.8 178.2,200.9 175,199.5 177.1,202.3 173.6,194.8 173.5,191.4 164.3,199.5M172.2,183.3 165.9,190.8 159.6,184.2 166.2,184.3M137.1,192.1 139.3,197.1 149.1,186.2 156,176.1 150.4,180.2 161.8,176.4 154.4,180.5M150.2,168.6 156.9,173.2 165.5,162.4 168.6,165.8 163.2,171.6 172.6,174.8 168.9,178.4 172,165.1M180.4,217 187.1,211.1 178.4,219.5 183.8,216.1 180.8,209.9 170.3,216.2 174.6,220 168.6,223.2 178.8,215.4M163.7,170 159.2,168.2 154.8,162.3 158.7,165.1 165.9,161.7 157,171.2 161,167.3 162.9,170.5 153.3,180.9 157.8,185.6M255.7,209.8 259.6,203.8 261.7,196.3 254.1,197.8M241.3,221 235.7,221.5M256.6,197.8 262.4,193.3 265.1,196.8 264.8,189.2M275.7,215.1 272.3,219.9 266.2,223.8 261.3,219.5 265.5,220.1 270,222.5 265.7,217.5 269.5,214.2 266.3,219.8M265.6,198.4 263.9,205.2 269.6,205.7 266.4,200.8 259.8,207.2 265.9,205.8 261.3,215.7 269.1,217.4 263,222.4 267.9,220.6M246.2,190 243.2,196.1 244.7,191.9 238.6,196.7 241.6,190.6 247.4,194.2 241.3,191.3M242.5,200.1 235.8,198.2 241.6,192.9 240.1,190.2 244.1,195.2 237.1,192.3 236.7,188.7M246.2,189.1 238.6,197.5 245.5,197.3 241.3,205.5 233.8,206.1 235.6,210.8 239.9,213.5M249.5,204.7 244.6,210.5 251.4,204.6 248.5,202.4 254.3,194.1 251.4,198.5 255.3,191.8M275.3,216.8 269.3,215.6 261.3,217.6 268,218.1M368.4,222.1 368.4,218.9 369.7,221 366.7,224.3 368.8,228.1M364.1,230 365.7,228.4 362.9,226.7 369.4,222.9 364.5,225.9 361.8,226.3 362.3,222 363.1,226.9 360.5,222.7M363.8,234 362.7,235.7 360.5,232.2M369,222 366.6,222.6 362.3,220.9 367,221.6 363.8,221.1 364.7,224.8 365.3,222.2 362.5,224 363.7,227.7M370.3,234.3 368.2,230.3 363.8,228.2 366.8,231.4 369.9,234.8 368,237.7M362.3,223.1 359.2,223.2M364,229.2 366.3,225.5 362.3,226.1 366.7,222.7M369.4,223.7 366.5,225.9 370.2,226.1 372.6,226.7M369.4,228.2 369.5,230.3 368.5,228.4 365.5,225.4 362.5,223.2 360.4,219.9M367.3,227.7 368.5,230.3 372,233.4M367.4,224.2 369,228.6 363.6,232.9 365.8,234.4 364.4,231.2 365.2,235.7 362.9,232.2M362.6,218.1 362.8,215.8 364.9,219.3 367.4,217.5 363.3,218.7 365.7,221.4 368.3,221.2 364.7,227.2M366.6,232.4 364,231.7 363.7,235.1 363.5,232.6 368.6,229.9 363.4,234 362,230.4 363.2,227.5 367.6,229.6M362.5,223.9 361.6,220.5 365.2,222.5 366.5,225.6 368.6,225.5 362.6,229.1M367.3,232.6 365,229.9 369.6,225.2 368.3,230.5 366.6,228.1 368.4,224.9 363.9,223.7 365.9,223.3M330.8,228.8 332.9,224.7 335.2,226 338.6,227.9M334.1,230.4 331.3,227.6 328,225.3M330.1,227.3 333.2,229.8 334.8,227 331.4,227.5 334.2,224.1 332.8,222.5 333,225.4M333.4,224.5 331.1,229.1 333,230.1 329.6,229.9 334.2,227.6 336.3,225.6 335.3,221.8 329,225.2 334.7,221.2 331.8,225M330.2,225.6 331.8,222.8 331.2,226.7 332.3,222.5 329,227 325.7,229.1M150,159.5 153,158 156,156.5 159,155 162,153.3 165,151.7 168,150M143,180.5 150,176.5 157,172.5 165,164 171,161.4M158,182 168,176.5 178,171 185,166.5 192,162M175,157 177.7,156 180.3,155 183,154 186,153 189,152 192,151M176,152.5 176.7,156.3 177.3,160.2 178,164M99,235.2 103.5,230.5 107.6,225.8 110,220.5 112.3,215.7 117,208.6M115.4,249.3 118.5,245 121,241.4 122.5,235 123.3,229M148,206 149,205 150,204 151,203 152.2,202.3 153.3,201.7 154.5,201M154.5,211.8 158,205 162.3,199.3 166,195 170,191.4 176.4,186.8M173.3,225.8 175.4,223.7 177.4,221.6 179.5,219.5 181.6,217.4 183.7,215.4 185.8,213.3M188.9,224.3 196,214.5 204.5,205.5 210.5,200.5 217,196M196,224.5 197.2,223.7 198.3,222.8 199.5,222 200.7,221 201.8,220 203,219M206.8,231.8 207.7,230.2 208.6,228.6 209.5,227 210.4,225.7 211.4,224.3 212.3,223M215.4,229.4 217.3,227.8 219.1,226.1 221,224.5 222.8,222.8 224.6,221 226.4,219.3 228.5,217.2 230.5,215.1 232.6,213M121.7,202.4 124.3,201.4 126.9,200.3 129.5,199.3 131.8,197.5 134.2,195.8 136.5,194 138.9,192.1 141.2,190.2 143.6,188.3M252,202 253.2,205 254.5,208.3 256,210.8 257.6,213M246.7,212.2 246.4,213.2 246.1,214.3 245.8,215.3 245.5,216.4 245.3,217.4 245,218.5M259.2,217.7 258.4,219.2 257.6,220.8 256.8,222.3 256,223.9 255.3,225.4 254.5,227M349,230.2 350,226 351.4,222.4 354,219 356.8,216 362.3,213 367,208.3M365.4,188 366.3,189.5 367.1,191 368,192.5 369,194.1 369.9,195.8 370.9,197.4M372.5,229.4 369.3,234.9 367,239.6 364,242.7 361,245.8M374,214.6 374.7,216.2 375.3,217.7 376,219.3 376.7,220.9 377.3,222.4 378,224M195,184 198,181.3 201,178.7 204,176 207.3,173.7 210.7,171.3 214,169M198,194 201.3,190.7 204.7,187.3 208,184 212,180.7 216,177.3 220,174M204,202 207.3,198 210.7,194 214,190 218,186.7 222,183.3 226,180M192,210 194,207.3 196,204.7 198,202 200.3,199.7 202.7,197.3 205,195M153.7,148.1 149,152 143.2,152.2 139.7,154.7 135.4,159.4 130.7,161.4 126.4,157.5 125.6,162.5 120.1,165.3 123.6,171.5M149,152 153.7,155.9M126.4,178.2 132.6,192.2 138.9,188.3 143.6,185.2 145.9,188.3 146.7,191.4 138.9,197.7M146.3,180.5 147.5,185.2 151.4,188.3 158.4,190.3 161.5,186 160.8,182.8 156,182.8 153.3,188.3M191.2,146.9 185.8,152.4M98.3,213.3 101.4,208.6 115.4,206.3 131,202.4 128.7,210.2 123,207.5M98.3,213.3 112.3,215.7M120.9,217.2 138.9,219.6M136.5,202.4 144.3,219.6 146.7,214.9M113.9,220.3 121.7,228.9 124.8,226.6M120.9,242.2 137.3,246.1 142,243 149,247.7M156,253.2 172.5,265.7 170,270.3M172.5,265.7 187.3,262.5M193.6,261.8 210.8,258.3M217.4,256.8 234.6,252.5M241.2,251.3 258.8,247.4M265,245.8 282.6,241.5M288.9,239.6 306.8,236M313,234.9 329.5,230.2 336.5,231.4M292,218.5 300.6,214.2M303.7,212.2 308.8,202.5 305.3,196.2 310,198.2 314.7,195.4M305.3,196.2 309,193 312,197M317.8,212.2 317.4,215.7 331,220.8M343.6,224.7 349,230.6M348.3,195 356.8,196.6 361.5,190.3M359.2,196.6 361.5,199.7 359.2,202 362.3,209.9M370,188 372.5,193 371.7,197.4M372.5,201.3 374,214.6M367,213 374,217.7M363,249.3 371.7,266.5M375.8,274 383,290.5M385.8,295.5 394.5,314M389.5,305.5 395.8,311.8M359.5,301.8 357,306 377,306M382,306 392,306.8M355.8,306.8 343,319M338,324 319.5,344M313,350.5 297,368M290.8,374 273,393M237,402.5 219.5,405M214.5,406 194.5,408.5M188,409 167,412M162,412.5 152,413.5M260.8,188 283.4,213.8 288,219.3M292,219.3 283.4,223.5M281,210 289,214 285,220 290,224M262.3,202.8 267,199.7 273,203.6 267,205.2 262.3,202.8M273,203.6 277,199.7 281,205.2M252,208.7 247.5,210.7 244.3,218.5 248.3,219.6 249.4,224.7 245.5,229.4 232.6,216.9M257.6,213 262.3,208.5 260,202M257.6,213 262.3,219.3 267,218 268.6,221.6 264.7,225.5 262.3,220.8M246.7,188 251.4,195 256,196.2M250.6,195.8 251.4,198.2 255.3,200.5 252.2,202M265.4,188 269.3,192 274.8,189.6 280.3,192 285.8,195.8M192,233.3 196.7,229.4 192,224M196.7,227 199.8,230.6 216.2,239.2 219.3,234.9 215.4,230.2M208.4,217.7 213,218.5 217.8,215.3 225.6,214.6 228,210.7M229,129 226,126 210,127 206,130 208,135 215,139 232,143M231,126.5 236,123.5 240,125 244,133M198,147 205,141 210,139M202,144 212,141 209,146M252,134 256,131.5 259,136 264,139M345,156 349,159 354,162 357,168 352,166 355,171M344,168 350,176 355,184 360,181 364,187 369,188 372,193M147.9,423.4 144.6,421.1 144.8,424.2 141.4,420.8 144.4,424.8 148,422.7 145.4,419.3 147.9,423.3M140.5,416.9 137.6,419.4 140.1,423.7 144.7,424.9 142.7,421.9M143,416.8 142.2,420.1 144.1,423.1 142.7,419.9 144.8,421 145.1,424.5 146.7,421.3 148.8,415.8 147.9,418.8 149.1,420.6M141.6,414.4 138.4,420.5 139.5,422.5 137.7,419.9 141.7,414.7 142.6,418.5 144.4,421.8 142.8,417.5 140.5,413.6M155.8,421.6 152.9,417.9 155.3,419.7 149.4,424 153.1,424.1 150.8,420.1 154.8,421.2 156.4,422.5M147.4,424.3 152,423.6 147.3,425.9 143.8,427.2 146.5,421.3 142.5,426.2M154.3,422.8 151.5,420.9 157.9,418.4 155.2,423.3 152.9,423.5 151.4,422.1 153,419.2 150.2,417.6M145.9,422.7 144.3,421.5 146.6,416.7 144.9,420.7M138.6,420.4 140.7,422.2 137.5,419.9 136.2,416.7 138.1,414.1 138.9,410.3M140,417.5 135.3,421.2M258.2,408.4 255.5,405.1 259.6,407.5 257.2,407.6M260.8,409.5 256.7,407.1 259.4,406.8 262,410.5 257.2,409.3 261.1,411.7 259.8,408.4 259.2,411.4 257.5,410.1 260,410.1M245.9,401.4 244.8,398.8M264.1,400.4 262.8,397.6 265.7,401 262.2,400.1M255.6,398.6 254.3,403.2 253.7,400.9 251.9,400.1 249.5,397.9M249,405.7 253,408 249.2,408.6 251.4,410.6 254.3,404 258,406.8 263.1,405.4 262.4,401.9 265.4,404.5M265.2,405.8 261.5,402.8 264.1,406.2 268.4,407.4M260.7,400.3 258.3,400 255.7,402.3 250,406 248,405M263.9,399.2 265.9,403.1 262.2,400.9 265.2,404.9 263.7,402.7 266.9,400.5 262,405.5 259.9,403.2 264.1,398.6M262.3,404.8 265.3,405.9 263.3,402.2 265.4,398.8 263.3,400.3M253.7,399.7 251,397.8 247.1,394.9M257.4,407.2 253.8,405.5 258.2,405 257.4,401.3M263.4,406.3 260.6,407.6 261.9,411.8 258.5,411.5 256.7,413.9 252.9,412.1M249.5,407.7 247.9,410 251.7,412.2 248.9,415.8M254.9,398.6 255.5,395.1M245.6,403.4 248,399.3 249.5,401.8 246.2,400.3M252.5,403.1 248.1,402.1 250.7,397.9 253.5,398.7 254.9,400.2 252.4,403.5 255.7,399.5M251.9,410.2 253.2,412.6 255.4,414 252.8,413.2 254.6,409.7 252.9,405.6 250.3,402.2 251.6,403.8 249,409.1 246.4,407.7M257.4,403.5 253.2,408.2 255.7,409.7 252.1,407 251.5,403.2 255.2,403.6M256.3,406.8 262,402 259.1,400.3 257.6,405.6 263.2,402.7 258.9,400.8M137,416 141,424 145,428 143,422 148,426 152,422 157,418 153,416 149,421 155,424M247,400 250,406 247,408 251,413 254,411 252,416 256,412 262,406 266,401 262,399" fill="none" stroke="#000" stroke-width="1"/><path d="M133.4,414.4 134.6,420 142.1,430 155.3,425.6 160.9,417.5 157.1,413.8 144,411.3 137.8,409.4Z" fill="none" stroke="#000" stroke-width="1.7"/><path d="M110.3,428.4 115.5,421.5 120.9,415.6 126,413.3 131.5,411.9 137.8,409.4 144,410.6 152,412 158,413.5" fill="none" stroke="#000" stroke-width="1.6"/><path d="M243,402 245,397 252,395.5 258,397.5 264,395.5 270,398.5 269,406 264,413 259,415 253,418 248,413 243.5,406Z" fill="none" stroke="#000" stroke-width="2.0"/><path d="M270,399 276,403 282,407.5" fill="none" stroke="#000" stroke-width="2.4"/><path d="M257,415.5 263,412.5 266,407" fill="none" stroke="#000" stroke-width="1.6"/><path d="M258,398 260,404 259,409" fill="none" stroke="#000" stroke-width="1.6"/><circle shape-rendering="auto" cx="144.5" cy="418.2" r="3.8" fill="#000"/><circle shape-rendering="auto" cx="147.5" cy="416.5" r="1.0" fill="#fff"/><circle shape-rendering="auto" cx="141.5" cy="415" r="0.8" fill="#fff"/><circle shape-rendering="auto" cx="254" cy="404" r="4.6" fill="#000"/><circle shape-rendering="auto" cx="254.3" cy="404" r="2.1" fill="#fff"/><circle shape-rendering="auto" cx="261.5" cy="411.2" r="1.6" fill="#fff"/></svg><!--ART-END--></div>
<div id="lefttb"></div><!--LEFT-START--><div class="tbtn on" style="top:107px"></div><div class="tbtn" style="top:141px"></div><div class="tbtn" style="top:175px"></div><div class="tbtn" style="top:209px"></div><div class="tbtn" style="top:243px"></div><div class="tbtn" style="top:277px"></div><div class="tbtn" style="top:311px"></div><div class="tbtn" style="top:345px"></div><div class="tbtn" style="top:379px"></div><div class="tbtn" style="top:413px"></div><div class="tbtn" style="top:447px"></div><svg style="position:absolute;left:0;top:100px" width="42" height="390" viewBox="0 100 42 390">
<defs><linearGradient id="ag" x1="0" y1="0" x2="1" y2="1"><stop offset="0" stop-color="#000"/><stop offset=".45" stop-color="#404040"/><stop offset="1" stop-color="#000"/></linearGradient>
<radialGradient id="mg" cx=".35" cy=".35" r=".8"><stop offset="0" stop-color="#fff"/><stop offset=".5" stop-color="#e8ecff"/><stop offset="1" stop-color="#88a0ff"/></radialGradient>
<linearGradient id="og" x1="0" y1="0" x2="1" y2="0"><stop offset="0" stop-color="#ffc820"/><stop offset=".5" stop-color="#f8a800"/><stop offset="1" stop-color="#e08800"/></linearGradient></defs>
<!-- red triangles -->
<path d="M29,172h5.500v-5.500zM29,206h5.500v-5.500zM29,240h5.500v-5.500zM29,342h5.500v-5.500zM29,376h5.500v-5.500zM29,478h5.500v-5.500z" fill="#f00"/>
<!-- 0 arrow -->
<path d="M14,111.500v19.500l4.800,-4.500l4,9.200c0.800,1.500 3.800,0.300 3.200,-1.400l-4,-8.800h6.200z" fill="url(#ag)"/>
<!-- 1 node edit -->
<rect x="11" y="145" width="7" height="7" fill="#000"/><path d="M18,147.500l12,-2.300M11.500,152l-5.200,10" stroke="#000" stroke-width="1.200" fill="none"/><path d="M18,153v17l12,-5.700z" fill="url(#ag)"/>
<!-- 2 magnifier -->
<path d="M23,195l6,6.200" stroke="#704000" stroke-width="5"/><path d="M23.500,195.500l5.200,5.400" stroke="#f0a010" stroke-width="3.200"/><circle cx="16.800" cy="188.400" r="8" fill="url(#mg)" stroke="#383838" stroke-width="1.300"/>
<!-- 4 ellipse -->
<ellipse cx="18.200" cy="256.800" rx="10.500" ry="8.400" fill="#b8f8c8" stroke="#2040ff" stroke-width="1.300"/><path d="M13.300,260.700c2,-2.500 5,-3.500 8,-3.300c4,0.200 7.500,2 9,5.500c1,3 -1.500,5.500 -4,6.500c-1.500,0.700 -3.500,1.100 -5.300,1.100" fill="none" stroke="#2040ff" stroke-width="1.300"/>
<!-- 5 rects -->
<rect x="7.500" y="282.500" width="19" height="14" fill="#b8f8c8" stroke="#2040ff" stroke-width="1.200"/><rect x="13.700" y="290.800" width="18.600" height="13.600" rx="3.500" fill="#b8f8c8" stroke="#2040ff" stroke-width="1.300"/>
<!-- 6 polygon + S -->
<path d="M9.500,318.200l14.700,-4l-5.400,8.300l11.700,11h-21z" fill="#b8f8c8" stroke="#2040ff" stroke-width="1.200"/><path d="M30.500,326.800c-1.500,-2 -3.500,-2.800 -5.500,-2.300c-2.500,0.600 -4.500,3 -3.500,5c0.800,1.600 3,2 3,4.500c0,2.500 -2,4.500 -4.500,5.200c-1.800,0.400 -3.500,0 -4.800,-0.700" fill="none" stroke="#2040ff" stroke-width="1.400"/>
<!-- 7 elbow -->
<path d="M7.500,358.800l9.300,-9.300h13.700v10.800h-7.800l-3.900,4v8.200h-11.300z" fill="#b0f8d0" stroke="#808080" stroke-width="1"/>
<path d="M20.500,350.500l1,9M23,350.500l0.500,9M25.500,350.500v9M28,350.500v9M18,351.500l3.500,8.500M15.500,353.500l5,8M13,356l6.500,6.500M10.500,358l8,6M8.500,361h10M8.500,363.500h10M8.500,366h10M8.500,368.500h10M8.500,371h10" stroke="#20c8c0" stroke-width="0.900" fill="none"/>
<!-- 8 ruler -->
<path d="M11,402.200l15.600,-16l5,5.800l-15.200,15.600z" fill="#fff" stroke="#000" stroke-width="1.300"/><path d="M14,401l1.500,1.500M16.500,398.500l1.500,1.500M19,396l1.500,1.500M21.500,393.500l1.500,1.500M24,391l1.500,1.500" stroke="#000" stroke-width="1"/>
<path d="M8,397.300l14.200,-13.400M6.500,395.500l3,3.500M20.500,382l3,3.500M8,397.300l1,-3.300M8,397.300l3.300,-0.500M22.200,383.900l-3.300,0.600M22.200,383.900l-0.800,3.200" stroke="#000" stroke-width="1.100" fill="none"/>
<!-- 9 disabled stitch -->
<g stroke="#a0a0a0" fill="none"><path d="M17,418v6l-3,4l3,4v6M22,418v6l-3,4l3,4v6M27,418v6l-3,4l3,4v6M32,418v6l-3,4l3,4v6" stroke-width="3" stroke-dasharray="2.500,0.600"/><path d="M9.500,430v11h24.500v-11" stroke-dasharray="2,1.200" stroke-width="1"/><rect x="6.500" y="424.500" width="3" height="3" fill="#fff"/><rect x="6.500" y="429.500" width="3" height="3" fill="#fff"/><path d="M10,426l5,3M10,431l5,-3" stroke-width="1.200"/></g>
<!-- 10 stamp -->
<path d="M18.500,453.700c3,0 4.500,3 4.500,6.500c0,4 -1.500,6 -2.500,7.800h-4c-1,-1.800 -2.500,-3.800 -2.500,-7.800c0,-3.500 1.500,-6.500 4.500,-6.500z" fill="url(#og)"/><rect x="17.300" y="468" width="2.600" height="3.500" fill="#505050"/>
<rect x="8.500" y="471.500" width="20.500" height="4.500" rx="1" fill="#fff" stroke="#404040" stroke-width="1.200"/><rect x="9" y="472.300" width="19.500" height="1.500" fill="#b08000"/>
</svg>
<div style="position:absolute;left:7px;top:210px;width:25px;height:30px;font-family:'Liberation Serif',serif;font-size:29px;line-height:30px;text-align:center;transform:scaleX(1.2);transform-origin:50% 50%;-webkit-text-stroke:.5px #000">A</div><!--LEFT-END-->
<!--BOT-START--><div id="vscroll">
<svg style="position:absolute;left:0;top:0" width="19" height="855" viewBox="1261 101 19 855"><path d="M1267,112l3.500,-4l3.500,4z" fill="#404040"/><path d="M1267,946l3.500,4l3.500,-4z" fill="#404040"/></svg>
<div class="thumb" style="left:2px;top:309px;width:14px;height:237px;background:linear-gradient(to right,#f8f8fa 0,#e6e6ec 45%,#cfcfd7 55%,#c4c4cc 100%)"><i style="position:absolute;left:3px;top:114px;width:6px;height:7px;background:linear-gradient(to bottom,#5a5a5a 0,#5a5a5a 1px,transparent 1px,transparent 2px,#5a5a5a 2px,#5a5a5a 3px,transparent 3px,transparent 4px,#5a5a5a 4px,#5a5a5a 5px,transparent 5px,transparent 6px,#5a5a5a 6px,#5a5a5a 7px)"></i></div>
</div>
<div id="hscroll">
<svg style="position:absolute;left:0;top:0" width="1218" height="17" viewBox="43 956 1218 17"><path d="M53.500,961l-4,3.500l4,3.500z" fill="#404040"/><path d="M1250,961l4,3.500l-4,3.500z" fill="#404040"/></svg>
<div class="thumb" style="left:364px;top:1px;width:490px;height:15px;background:linear-gradient(to bottom,#f8f8fa 0,#e6e6ec 45%,#cfcfd7 55%,#c4c4cc 100%)"><i style="position:absolute;left:242px;top:3px;width:5px;height:7px;background:linear-gradient(to right,#5a5a5a 0,#5a5a5a 1px,transparent 1px,transparent 2px,#5a5a5a 2px,#5a5a5a 3px,transparent 3px,transparent 4px,#5a5a5a 4px,#5a5a5a 5px)"></i></div>
</div>
<div id="status"><span>Press 'F1' for Help</span><div style="left:1180px;width:29px"></div><div style="left:1211px;width:34px"></div><div style="left:1247px;width:32px"></div></div>
<div id="taskbar">
<svg style="position:absolute;left:0;top:-6px" width="60" height="36" viewBox="0 988 60 36">
<defs><radialGradient id="orb" cx=".5" cy=".75" r=".75"><stop offset="0" stop-color="#3fd0ff"/><stop offset=".45" stop-color="#1a78c8"/><stop offset=".8" stop-color="#174a86"/><stop offset="1" stop-color="#2a5078"/></radialGradient>
<linearGradient id="orbg" x1="0" y1="0" x2="0" y2="1"><stop offset="0" stop-color="#fff" stop-opacity=".75"/><stop offset="1" stop-color="#fff" stop-opacity=".05"/></linearGradient></defs>
<circle cx="27" cy="1008" r="18" fill="url(#orb)" stroke="#24466e" stroke-width="1"/>
<path d="M10.500,1003a17,17 0 0 1 33,0c-9,5 -24,5 -33,0z" fill="url(#orbg)"/>
<g transform="translate(27,1007) scale(1.22) translate(-26,-1008.500)"><path d="M18.500,1000c2.500,-1.200 5,-1.200 7.500,0.300l-1.600,7.200c-2.500,-1.500 -5,-1.500 -7.500,-0.300z" fill="#f0642a"/>
<path d="M27.500,1000.800c2.500,1.500 5,1.500 7.500,0.300l-1.600,7.200c-2.500,1.200 -5,1.200 -7.500,-0.300z" fill="#8cc83c"/>
<path d="M16.500,1008.700c2.500,-1.200 5,-1.200 7.500,0.300l-1.600,7.200c-2.500,-1.500 -5,-1.500 -7.500,-0.300z" fill="#2a9be8"/>
<path d="M25.500,1009.500c2.500,1.500 5,1.500 7.500,0.300l-1.600,7.200c-2.500,1.200 -5,1.200 -7.500,-0.300z" fill="#fcc42c"/></g>
</svg>
<div class="tk" style="left:60px"><svg viewBox="0 0 16 16"><circle cx="8" cy="8" r="7.500" fill="#e33b2e"/><path d="M8,8L1.500,4.300A7.500,7.500 0 0 0 6.500,15.400z" fill="#2da94f"/><path d="M8,8L6.500,15.400A7.500,7.500 0 0 0 14.500,4.300z" fill="#fdd20a"/><path d="M8,8L14.500,4.300H8z" fill="#e33b2e"/><path d="M1.500,4.300A7.500,7.500 0 0 1 14.500,4.300L8,4.500z" fill="#e33b2e"/><circle cx="8" cy="8" r="3.600" fill="#fff"/><circle cx="8" cy="8" r="2.800" fill="#4a8af4"/></svg><span>Форум « Broidery....</span></div>
<svg style="position:absolute;left:222px;top:5px" width="20" height="20" viewBox="0 0 20 20"><circle cx="10" cy="10" r="7.600" fill="#14903c" stroke="#fff" stroke-width="1"/><path d="M6.500,5.500v5.500c0,4 6,4 6,0v-5.500M12.500,11c0,2.500 1,3 2.500,2.500M6.500,11v4.500" fill="none" stroke="#fff" stroke-width="2"/></svg>
<svg style="position:absolute;left:267px;top:5px" width="20" height="20" viewBox="0 0 20 20"><defs><radialGradient id="ffg" cx=".5" cy=".3" r=".8"><stop offset="0" stop-color="#ffc830"/><stop offset=".6" stop-color="#f07010"/><stop offset="1" stop-color="#c03808"/></radialGradient></defs><circle cx="10" cy="10.500" r="8.200" fill="url(#ffg)"/><circle cx="11.500" cy="8.500" r="4.800" fill="#2a64c8"/><path d="M8,4.500c1.500,-1 3.500,-1 5,0c-1,1.500 0,3 1.500,4c-1.500,2 -4,2.500 -6,1c-1.500,-1.500 -1.500,-3.500 -0.500,-5z" fill="#48a0e8"/><path d="M2.500,7c1,-2 2,-3 3.500,-3.500c-0.500,1.500 0,2.500 1.500,3c1.500,0.500 3,0.500 3.500,1.500c-1,0.500 -2,1 -2,2c0,1.500 2,2.500 4.500,1.500c-1,3 -5,4 -8,2c-2,-1.500 -3.500,-4 -3,-6.500z" fill="#f08010"/></svg>
<div class="tk" style="left:302px"><svg viewBox="0 0 16 16"><path d="M1,10l10,-4l4,1.500l-10,4z" fill="#e8e8e8" stroke="#606060" stroke-width=".7"/><path d="M1,10l4,1.500v2l-4,-1.500z" fill="#707070"/><path d="M5,11.500l10,-4v2l-10,4z" fill="#a8a8a8"/></svg><span>Автозапуск</span></div>
<div class="tk" style="left:453px"><svg viewBox="0 0 16 16"><path d="M4.500,0.500a4,4 0 0 1 3,1a6.500,6.500 0 0 1 7,7a4,4 0 0 1 -6,5.500a6.500,6.500 0 0 1 -7,-7a4,4 0 0 1 3,-6.500z" fill="#1cb0f0"/><text x="8" y="12.500" font-size="12" font-weight="bold" text-anchor="middle" fill="#fff" font-family="Liberation Sans, sans-serif">S</text></svg><span>Skype</span></div>
<div class="tk" style="left:604px"><svg viewBox="0 0 16 16"><defs><linearGradient id="psg" x1="0" y1="0" x2="0" y2="1"><stop offset="0" stop-color="#38b0ff"/><stop offset="1" stop-color="#0a58c8"/></linearGradient></defs><rect x="0" y="0" width="16" height="16" fill="url(#psg)"/><text x="8" y="11.500" font-size="9" font-weight="bold" text-anchor="middle" fill="#001030" font-family="Liberation Sans, sans-serif">Ps</text></svg><span>Adobe Photoshop ...</span></div>
<div class="tk act" style="left:755px"><svg viewBox="0 0 16 16"><use href="#parrot"/></svg><span>Untitled41.pes - La...</span></div>
<div class="tk" style="left:906px"><svg viewBox="0 0 16 16"><path d="M8,0.500c-1,3 -6,5 -6,9.500a6,6 0 0 0 12,0c0,-3 -2,-4 -3,-6c0,3 -3,3 -3,6a2,2 0 0 0 4,0" fill="none" stroke="#f06018" stroke-width="2.200"/><path d="M5.500,10a2.500,2.500 0 0 0 5,0" fill="none" stroke="#28a0d8" stroke-width="1.800"/></svg><span>Wilcom TrueSizer -...</span></div>
<div style="position:absolute;left:1066px;top:6px;color:#fff;font-size:12px;line-height:15px">EN</div>
<svg style="position:absolute;left:1090px;top:0" width="190" height="30" viewBox="1090 994 190 30" font-family="Liberation Sans, sans-serif">
<path d="M1097.500,1012l4,-4l4,4z" fill="#fff"/>
<circle cx="1126" cy="1009" r="7.800" fill="#14903c" stroke="#fff" stroke-width="1.100"/><path d="M1123,1005v5c0,3.500 5,3.500 5,0v-5M1128,1010c0,2 1,2.500 2,2M1123,1010v4" fill="none" stroke="#fff" stroke-width="1.700"/>
<rect x="1146.500" y="1006.500" width="10" height="8" fill="#6a7a90" stroke="#fff" stroke-width="1.200"/><path d="M1148,1017.500h8M1152,1015v2.500" stroke="#fff" stroke-width="1.200"/><path d="M1143.500,1003v12M1142,1003.500h3.500v4h-3.500z" fill="none" stroke="#fff" stroke-width="1.100"/>
<path d="M1166.500,1007h2.500l4,-4v12l-4,-4h-2.500z" fill="#e8e8e8" stroke="#fff" stroke-width=".8"/><circle cx="1177.500" cy="1013" r="4.200" fill="#e02020" stroke="#fff" stroke-width=".6"/><path d="M1175.700,1011.200l3.600,3.600M1179.300,1011.200l-3.600,3.600" stroke="#fff" stroke-width="1.300"/>
<rect x="1265.500" y="994.500" width="15" height="30" fill="#848e9e" stroke="#3a465c"/><rect x="1266.500" y="995.500" width="13" height="28" fill="none" stroke="#b8c0cc" stroke-opacity=".8"/>
</svg>
<div style="position:absolute;left:1214px;top:9px;color:#fff;font-size:12px;line-height:15px;letter-spacing:-.3px">23:11</div>
</div>
<!--BOT-END-->
</body>
</html>
